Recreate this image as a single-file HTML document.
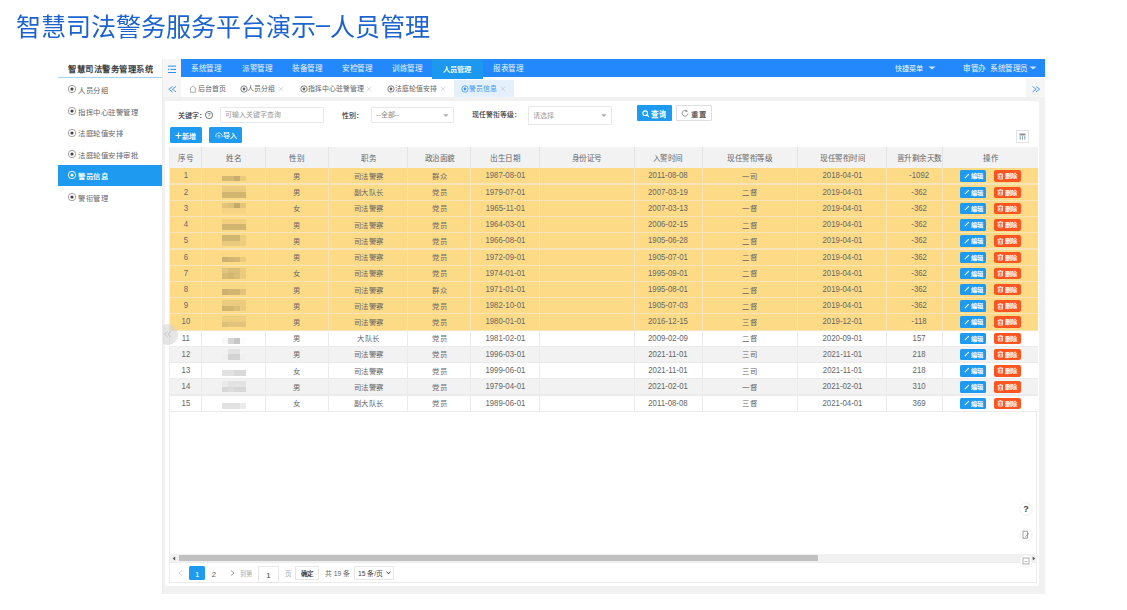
<!DOCTYPE html>
<html lang="zh-CN"><head><meta charset="utf-8"><title>人员管理</title>
<style>
html,body{margin:0;padding:0;background:#fff;}
body{width:1127px;height:610px;overflow:hidden;position:relative;font-family:'Liberation Sans', sans-serif;}
svg{overflow:visible}
</style></head><body>
<div style="position:absolute;left:15.60px;top:-13.20px;line-height:80px;font-size:100.20px;color:#1c63cf;font-weight:350;white-space:nowrap;transform:scale(0.25);transform-origin:0 50%;">智慧司法警务服务平台演示<span style='font-family:"Liberation Sans";position:relative;top:-10px;'>–</span>人员管理</div>
<div style="position:absolute;left:68.30px;top:28.70px;line-height:80px;font-size:33.60px;color:#3a3a3a;font-weight:bold;white-space:nowrap;transform:scale(0.25);transform-origin:0 50%;">智慧司法警务管理系统</div>
<div style="position:absolute;left:58.00px;top:76.70px;width:104.00px;height:1.50px;background:#a6d3f2"></div>
<div style="position:absolute;left:162.00px;top:59.00px;width:1.00px;height:535.00px;background:#ececec"></div>
<svg style="position:absolute;left:67.40px;top:84.30px" width="10" height="10" viewBox="0 0 10 10"><circle cx="5" cy="5" r="3.7" fill="none" stroke="#999" stroke-width="0.9"/><circle cx="5" cy="5" r="1.6" fill="#444"/></svg>
<div style="position:absolute;left:78.30px;top:49.80px;line-height:80px;font-size:29.60px;color:#666;font-weight:normal;white-space:nowrap;transform:scale(0.25);transform-origin:0 50%;">人员分组</div>
<svg style="position:absolute;left:67.40px;top:106.30px" width="10" height="10" viewBox="0 0 10 10"><circle cx="5" cy="5" r="3.7" fill="none" stroke="#999" stroke-width="0.9"/><circle cx="5" cy="5" r="1.6" fill="#444"/></svg>
<div style="position:absolute;left:78.30px;top:71.80px;line-height:80px;font-size:29.60px;color:#666;font-weight:normal;white-space:nowrap;transform:scale(0.25);transform-origin:0 50%;">指挥中心驻警管理</div>
<svg style="position:absolute;left:67.40px;top:127.60px" width="10" height="10" viewBox="0 0 10 10"><circle cx="5" cy="5" r="3.7" fill="none" stroke="#999" stroke-width="0.9"/><circle cx="5" cy="5" r="1.6" fill="#444"/></svg>
<div style="position:absolute;left:78.30px;top:93.10px;line-height:80px;font-size:29.60px;color:#666;font-weight:normal;white-space:nowrap;transform:scale(0.25);transform-origin:0 50%;">法庭轮值安排</div>
<svg style="position:absolute;left:67.40px;top:149.00px" width="10" height="10" viewBox="0 0 10 10"><circle cx="5" cy="5" r="3.7" fill="none" stroke="#999" stroke-width="0.9"/><circle cx="5" cy="5" r="1.6" fill="#444"/></svg>
<div style="position:absolute;left:78.30px;top:114.50px;line-height:80px;font-size:29.60px;color:#666;font-weight:normal;white-space:nowrap;transform:scale(0.25);transform-origin:0 50%;">法庭轮值安排审批</div>
<div style="position:absolute;left:58.00px;top:165.00px;width:104.00px;height:21.20px;background:#1e9bf0"></div>
<svg style="position:absolute;left:67.40px;top:170.40px" width="10" height="10" viewBox="0 0 10 10"><circle cx="5" cy="5" r="3.7" fill="none" stroke="#fff" stroke-width="0.9"/><circle cx="5" cy="5" r="1.6" fill="#fff"/></svg>
<div style="position:absolute;left:78.30px;top:135.90px;line-height:80px;font-size:29.60px;color:#fff;font-weight:bold;white-space:nowrap;transform:scale(0.25);transform-origin:0 50%;">警员信息</div>
<svg style="position:absolute;left:67.40px;top:192.00px" width="10" height="10" viewBox="0 0 10 10"><circle cx="5" cy="5" r="3.7" fill="none" stroke="#999" stroke-width="0.9"/><circle cx="5" cy="5" r="1.6" fill="#444"/></svg>
<div style="position:absolute;left:78.30px;top:157.50px;line-height:80px;font-size:29.60px;color:#666;font-weight:normal;white-space:nowrap;transform:scale(0.25);transform-origin:0 50%;">警衔管理</div>
<div style="position:absolute;left:163.00px;top:59.00px;width:18.00px;height:19.00px;background:#f6f6f6"></div>
<svg style="position:absolute;left:167.00px;top:64.00px" width="10" height="10" viewBox="0 0 10 10"><rect x="1" y="1.6" width="8" height="1" fill="#2b8ef0"/><rect x="1" y="4.9" width="1.3" height="1" fill="#2b8ef0"/><rect x="3.4" y="4.9" width="5.6" height="1" fill="#2b8ef0"/><rect x="1" y="8" width="8" height="1" fill="#2b8ef0"/></svg>
<div style="position:absolute;left:181.00px;top:59.00px;width:864.00px;height:18.30px;background:#2288fc"></div>
<div style="position:absolute;left:181.40px;top:28.40px;width:200.80px;text-align:center;line-height:80px;font-size:30.40px;color:#e8f2ff;font-weight:normal;white-space:nowrap;transform:scale(0.2500,0.25);transform-origin:0 50%;">系统管理</div>
<div style="position:absolute;left:231.60px;top:28.40px;width:200.80px;text-align:center;line-height:80px;font-size:30.40px;color:#e8f2ff;font-weight:normal;white-space:nowrap;transform:scale(0.2500,0.25);transform-origin:0 50%;">派警管理</div>
<div style="position:absolute;left:281.80px;top:28.40px;width:200.80px;text-align:center;line-height:80px;font-size:30.40px;color:#e8f2ff;font-weight:normal;white-space:nowrap;transform:scale(0.2500,0.25);transform-origin:0 50%;">装备管理</div>
<div style="position:absolute;left:332.00px;top:28.40px;width:200.80px;text-align:center;line-height:80px;font-size:30.40px;color:#e8f2ff;font-weight:normal;white-space:nowrap;transform:scale(0.2500,0.25);transform-origin:0 50%;">安检管理</div>
<div style="position:absolute;left:382.20px;top:28.40px;width:200.80px;text-align:center;line-height:80px;font-size:30.40px;color:#e8f2ff;font-weight:normal;white-space:nowrap;transform:scale(0.2500,0.25);transform-origin:0 50%;">训练管理</div>
<div style="position:absolute;left:432.40px;top:59.00px;width:50.20px;height:19.70px;background:#1c98ee"></div>
<div style="position:absolute;left:432.40px;top:28.60px;width:200.80px;text-align:center;line-height:80px;font-size:29.00px;color:#fff;font-weight:bold;white-space:nowrap;transform:scale(0.2500,0.25);transform-origin:0 50%;">人员管理</div>
<div style="position:absolute;left:482.60px;top:28.40px;width:200.80px;text-align:center;line-height:80px;font-size:30.40px;color:#e8f2ff;font-weight:normal;white-space:nowrap;transform:scale(0.2500,0.25);transform-origin:0 50%;">报表管理</div>
<div style="position:absolute;left:895.00px;top:28.40px;line-height:80px;font-size:28.40px;color:#eef5ff;font-weight:normal;white-space:nowrap;transform:scale(0.25);transform-origin:0 50%;">快捷菜单</div>
<svg style="position:absolute;left:927.50px;top:66.00px" width="8" height="4" viewBox="0 0 8 4"><path d="M0.5 0.5 L7.5 0.5 L4 3.5 Z" fill="#cfe3fb"/></svg>
<div style="position:absolute;left:963.00px;top:28.40px;line-height:80px;font-size:30.40px;color:#eef5ff;font-weight:normal;white-space:nowrap;transform:scale(0.25);transform-origin:0 50%;">审管办</div>
<div style="position:absolute;left:990.00px;top:28.40px;line-height:80px;font-size:30.40px;color:#eef5ff;font-weight:normal;white-space:nowrap;transform:scale(0.25);transform-origin:0 50%;">系统管理员</div>
<svg style="position:absolute;left:1029.00px;top:66.00px" width="8" height="4" viewBox="0 0 8 4"><path d="M0.5 0.5 L7.5 0.5 L4 3.5 Z" fill="#cfe3fb"/></svg>
<div style="position:absolute;left:163.00px;top:78.00px;width:18.00px;height:19.20px;background:#f6f6f6"></div>
<svg style="position:absolute;left:167.80px;top:85.60px" width="9" height="7" viewBox="0 0 9 7"><path d="M4.5 0.5 L0.8 3.2 L4.5 5.9 M8 0.5 L4.3 3.2 L8 5.9" fill="none" stroke="#3f95ee" stroke-width="0.9"/></svg>
<div style="position:absolute;left:1026.00px;top:78.00px;width:19.00px;height:19.20px;background:#f6f6f6"></div>
<svg style="position:absolute;left:1031.50px;top:85.60px" width="9" height="7" viewBox="0 0 9 7"><path d="M0.5 0.5 L4.2 3.2 L0.5 5.9 M4 0.5 L7.7 3.2 L4 5.9" fill="none" stroke="#3f95ee" stroke-width="0.9"/></svg>
<svg style="position:absolute;left:188.50px;top:84.50px" width="8" height="8" viewBox="0 0 8 8"><path d="M0.7 3.8 L4 0.8 L7.3 3.8 M1.6 3.2 V7.3 H6.4 V3.2" fill="none" stroke="#999" stroke-width="0.8"/></svg>
<div style="position:absolute;left:197.60px;top:49.10px;line-height:80px;font-size:28.00px;color:#666;font-weight:normal;white-space:nowrap;transform:scale(0.25);transform-origin:0 50%;">后台首页</div>
<svg style="position:absolute;left:238.50px;top:83.60px" width="10" height="10" viewBox="0 0 10 10"><circle cx="5" cy="5" r="3.2" fill="none" stroke="#666" stroke-width="0.8"/><circle cx="5" cy="5" r="1.4" fill="#666"/></svg>
<div style="position:absolute;left:247.30px;top:49.10px;line-height:80px;font-size:27.60px;color:#666;font-weight:normal;white-space:nowrap;transform:scale(0.25);transform-origin:0 50%;">人员分组</div>
<svg style="position:absolute;left:278.30px;top:86.30px" width="6" height="6" viewBox="0 0 6 6"><path d="M0.6 0.6 L5.2 5.2 M5.2 0.6 L0.6 5.2" stroke="#c8c8c8" stroke-width="0.7"/></svg>
<svg style="position:absolute;left:298.80px;top:83.60px" width="10" height="10" viewBox="0 0 10 10"><circle cx="5" cy="5" r="3.2" fill="none" stroke="#666" stroke-width="0.8"/><circle cx="5" cy="5" r="1.4" fill="#666"/></svg>
<div style="position:absolute;left:307.60px;top:49.10px;line-height:80px;font-size:27.60px;color:#666;font-weight:normal;white-space:nowrap;transform:scale(0.25);transform-origin:0 50%;">指挥中心驻警管理</div>
<svg style="position:absolute;left:365.70px;top:86.30px" width="6" height="6" viewBox="0 0 6 6"><path d="M0.6 0.6 L5.2 5.2 M5.2 0.6 L0.6 5.2" stroke="#c8c8c8" stroke-width="0.7"/></svg>
<svg style="position:absolute;left:386.00px;top:83.60px" width="10" height="10" viewBox="0 0 10 10"><circle cx="5" cy="5" r="3.2" fill="none" stroke="#666" stroke-width="0.8"/><circle cx="5" cy="5" r="1.4" fill="#666"/></svg>
<div style="position:absolute;left:394.80px;top:49.10px;line-height:80px;font-size:27.60px;color:#666;font-weight:normal;white-space:nowrap;transform:scale(0.25);transform-origin:0 50%;">法庭轮值安排</div>
<svg style="position:absolute;left:439.70px;top:86.30px" width="6" height="6" viewBox="0 0 6 6"><path d="M0.6 0.6 L5.2 5.2 M5.2 0.6 L0.6 5.2" stroke="#c8c8c8" stroke-width="0.7"/></svg>
<div style="position:absolute;left:454.30px;top:79.80px;width:60.20px;height:17.40px;background:#e4f1fc"></div>
<svg style="position:absolute;left:459.80px;top:83.60px" width="10" height="10" viewBox="0 0 10 10"><circle cx="5" cy="5" r="3.2" fill="none" stroke="#3d97ee" stroke-width="0.8"/><circle cx="5" cy="5" r="1.4" fill="#3d97ee"/></svg>
<div style="position:absolute;left:468.60px;top:49.10px;line-height:80px;font-size:27.60px;color:#3d97ee;font-weight:normal;white-space:nowrap;transform:scale(0.25);transform-origin:0 50%;">警员信息</div>
<svg style="position:absolute;left:499.80px;top:86.30px" width="6" height="6" viewBox="0 0 6 6"><path d="M0.6 0.6 L5.2 5.2 M5.2 0.6 L0.6 5.2" stroke="#c8c8c8" stroke-width="0.7"/></svg>
<div style="position:absolute;left:163.00px;top:97.20px;width:882.00px;height:496.80px;background:#f1f1f1"></div>
<div style="position:absolute;left:165.20px;top:100.60px;width:874.30px;height:485.10px;background:#fff;border-radius:2px"></div>
<div style="position:absolute;left:169.20px;top:146.80px;width:868.20px;height:436.70px;border:1px solid #ececec;box-sizing:border-box"></div>
<div style="position:absolute;left:177.50px;top:75.80px;line-height:80px;font-size:28.00px;color:#222;font-weight:normal;white-space:nowrap;transform:scale(0.25);transform-origin:0 50%;-webkit-text-stroke:0.25px #444;">关键字：</div>
<svg style="position:absolute;left:203.60px;top:110.30px" width="10" height="10" viewBox="0 0 10 10"><circle cx="5" cy="5" r="3.6" fill="none" stroke="#555" stroke-width="0.8"/><text x="5" y="7.4" font-size="6" text-anchor="middle" fill="#555" font-family="Liberation Sans">?</text></svg>
<div style="position:absolute;left:220.00px;top:106.60px;width:104.40px;height:16.60px;border:1px solid #e8e8e8;box-sizing:border-box;background:#fff;border-radius:1px"></div>
<div style="position:absolute;left:225.30px;top:75.10px;line-height:80px;font-size:27.60px;color:#999;font-weight:normal;white-space:nowrap;transform:scale(0.25);transform-origin:0 50%;">可输入关键字查询</div>
<div style="position:absolute;left:342.00px;top:75.60px;line-height:80px;font-size:28.00px;color:#222;font-weight:normal;white-space:nowrap;transform:scale(0.25);transform-origin:0 50%;-webkit-text-stroke:0.25px #444;">性别：</div>
<div style="position:absolute;left:370.60px;top:106.70px;width:83.40px;height:16.50px;border:1px solid #e8e8e8;box-sizing:border-box;background:#fff;border-radius:1px"></div>
<div style="position:absolute;left:376.40px;top:75.30px;line-height:80px;font-size:28.00px;color:#888;font-weight:normal;white-space:nowrap;transform:scale(0.25);transform-origin:0 50%;">--全部--</div>
<svg style="position:absolute;left:442.50px;top:113.50px" width="6" height="4" viewBox="0 0 6 4"><path d="M0.3 0.3 L5.5 0.3 L2.9 3 Z" fill="#aaa"/></svg>
<div style="position:absolute;left:472.00px;top:75.10px;line-height:80px;font-size:27.60px;color:#222;font-weight:normal;white-space:nowrap;transform:scale(0.25);transform-origin:0 50%;-webkit-text-stroke:0.25px #444;">现任警衔等级：</div>
<div style="position:absolute;left:527.60px;top:105.50px;width:84.90px;height:19.30px;border:1px solid #e8e8e8;box-sizing:border-box;background:#fff;border-radius:1px"></div>
<div style="position:absolute;left:533.40px;top:75.50px;line-height:80px;font-size:28.00px;color:#a0a0a0;font-weight:normal;white-space:nowrap;transform:scale(0.25);transform-origin:0 50%;">请选择</div>
<svg style="position:absolute;left:601.20px;top:113.60px" width="6" height="4" viewBox="0 0 6 4"><path d="M0.3 0.3 L5.5 0.3 L2.9 3 Z" fill="#aaa"/></svg>
<div style="position:absolute;left:636.90px;top:105.10px;width:34.70px;height:16.30px;background:#1e9bf0;border-radius:1px"></div>
<svg style="position:absolute;left:641.50px;top:109.50px" width="8" height="8" viewBox="0 0 8 8"><circle cx="3.2" cy="3.2" r="2.3" fill="none" stroke="#fff" stroke-width="1.1"/><path d="M4.9 4.9 L6.9 6.9" stroke="#fff" stroke-width="1.2"/></svg>
<div style="position:absolute;left:651.20px;top:73.90px;line-height:80px;font-size:30.40px;color:#fff;font-weight:bold;white-space:nowrap;transform:scale(0.25);transform-origin:0 50%;">查询</div>
<div style="position:absolute;left:676.30px;top:105.30px;width:35.30px;height:16.10px;border:1px solid #dedede;box-sizing:border-box;background:#fff;border-radius:1px"></div>
<svg style="position:absolute;left:681.30px;top:109.40px" width="8" height="8" viewBox="0 0 8 8"><path d="M5.9 2.0 A2.9 2.9 0 1 0 6.9 4.7" fill="none" stroke="#777" stroke-width="0.8"/><path d="M5.0 0.6 L6.3 2.3 L4.4 2.8" fill="none" stroke="#777" stroke-width="0.7"/></svg>
<div style="position:absolute;left:691.30px;top:73.90px;line-height:80px;font-size:29.60px;color:#333;font-weight:normal;white-space:nowrap;transform:scale(0.25);transform-origin:0 50%;-webkit-text-stroke:0.3px #555;">重置</div>
<div style="position:absolute;left:169.50px;top:127.20px;width:32.30px;height:16.00px;background:#1e9bf0;border-radius:1.5px"></div>
<svg style="position:absolute;left:175.30px;top:132.00px" width="7" height="7" viewBox="0 0 7 7"><path d="M3.5 0.5 V6.5 M0.5 3.5 H6.5" stroke="#fff" stroke-width="1.1"/></svg>
<div style="position:absolute;left:182.00px;top:95.70px;line-height:80px;font-size:28.40px;color:#fff;font-weight:bold;white-space:nowrap;transform:scale(0.25);transform-origin:0 50%;">新增</div>
<div style="position:absolute;left:209.00px;top:127.20px;width:32.50px;height:16.00px;background:#1e9bf0;border-radius:1.5px"></div>
<svg style="position:absolute;left:214.50px;top:131.80px" width="8" height="7" viewBox="0 0 8 7"><path d="M1.5 5.3 A2 2 0 0 1 2.2 1.8 A2.4 2.4 0 0 1 6.3 2.4 A1.6 1.6 0 0 1 6.6 5.3" fill="none" stroke="#fff" stroke-width="0.8"/><path d="M4 6.5 V3.3 M2.9 4.3 L4 3.2 L5.1 4.3" fill="none" stroke="#fff" stroke-width="0.7"/></svg>
<div style="position:absolute;left:223.20px;top:95.70px;line-height:80px;font-size:28.00px;color:#fff;font-weight:bold;white-space:nowrap;transform:scale(0.25);transform-origin:0 50%;">导入</div>
<div style="position:absolute;left:1015.60px;top:130.30px;width:13.20px;height:13.20px;border:1px solid #e2e2e2;box-sizing:border-box;background:#fff"></div>
<svg style="position:absolute;left:1018.60px;top:133.40px" width="7" height="7" viewBox="0 0 7 7"><rect x="0.5" y="0.5" width="6" height="2" fill="#8a8f99"/><rect x="0.6" y="3.2" width="1.2" height="3.4" fill="#8fa6b8"/><rect x="2.9" y="3.2" width="1.2" height="3.4" fill="#8fa6b8"/><rect x="5.2" y="3.2" width="1.2" height="3.4" fill="#8fa6b8"/></svg>
<div style="position:absolute;left:169.70px;top:147.00px;width:868.30px;height:20.80px;background:#f2f2f2"></div>
<div style="position:absolute;left:169.70px;top:117.90px;width:127.20px;text-align:center;line-height:80px;font-size:30.40px;color:#666;font-weight:normal;white-space:nowrap;transform:scale(0.2500,0.25);transform-origin:0 50%;">序号</div>
<div style="position:absolute;left:201.50px;top:117.90px;width:254.00px;text-align:center;line-height:80px;font-size:30.40px;color:#666;font-weight:normal;white-space:nowrap;transform:scale(0.2500,0.25);transform-origin:0 50%;">姓名</div>
<div style="position:absolute;left:201.00px;top:147.00px;width:1.00px;height:20.80px;background:#e4e4e4"></div>
<div style="position:absolute;left:265.00px;top:117.90px;width:254.00px;text-align:center;line-height:80px;font-size:30.40px;color:#666;font-weight:normal;white-space:nowrap;transform:scale(0.2500,0.25);transform-origin:0 50%;">性别</div>
<div style="position:absolute;left:264.50px;top:147.00px;width:1.00px;height:20.80px;background:#e4e4e4"></div>
<div style="position:absolute;left:328.50px;top:117.90px;width:316.00px;text-align:center;line-height:80px;font-size:30.40px;color:#666;font-weight:normal;white-space:nowrap;transform:scale(0.2500,0.25);transform-origin:0 50%;">职务</div>
<div style="position:absolute;left:328.00px;top:147.00px;width:1.00px;height:20.80px;background:#e4e4e4"></div>
<div style="position:absolute;left:407.50px;top:117.90px;width:252.00px;text-align:center;line-height:80px;font-size:30.40px;color:#666;font-weight:normal;white-space:nowrap;transform:scale(0.2500,0.25);transform-origin:0 50%;">政治面貌</div>
<div style="position:absolute;left:407.00px;top:147.00px;width:1.00px;height:20.80px;background:#e4e4e4"></div>
<div style="position:absolute;left:470.50px;top:117.90px;width:274.80px;text-align:center;line-height:80px;font-size:30.40px;color:#666;font-weight:normal;white-space:nowrap;transform:scale(0.2500,0.25);transform-origin:0 50%;">出生日期</div>
<div style="position:absolute;left:470.00px;top:147.00px;width:1.00px;height:20.80px;background:#e4e4e4"></div>
<div style="position:absolute;left:539.20px;top:117.90px;width:380.80px;text-align:center;line-height:80px;font-size:30.40px;color:#666;font-weight:normal;white-space:nowrap;transform:scale(0.2500,0.25);transform-origin:0 50%;">身份证号</div>
<div style="position:absolute;left:538.70px;top:147.00px;width:1.00px;height:20.80px;background:#e4e4e4"></div>
<div style="position:absolute;left:634.40px;top:117.90px;width:271.60px;text-align:center;line-height:80px;font-size:30.40px;color:#666;font-weight:normal;white-space:nowrap;transform:scale(0.2500,0.25);transform-origin:0 50%;">入警时间</div>
<div style="position:absolute;left:633.90px;top:147.00px;width:1.00px;height:20.80px;background:#e4e4e4"></div>
<div style="position:absolute;left:702.30px;top:117.90px;width:380.80px;text-align:center;line-height:80px;font-size:30.40px;color:#666;font-weight:normal;white-space:nowrap;transform:scale(0.2500,0.25);transform-origin:0 50%;">现任警衔等级</div>
<div style="position:absolute;left:701.80px;top:147.00px;width:1.00px;height:20.80px;background:#e4e4e4"></div>
<div style="position:absolute;left:797.50px;top:117.90px;width:356.00px;text-align:center;line-height:80px;font-size:30.40px;color:#666;font-weight:normal;white-space:nowrap;transform:scale(0.2500,0.25);transform-origin:0 50%;">现任警衔时间</div>
<div style="position:absolute;left:797.00px;top:147.00px;width:1.00px;height:20.80px;background:#e4e4e4"></div>
<div style="position:absolute;left:886.50px;top:117.90px;width:256.80px;text-align:center;line-height:80px;font-size:30.40px;color:#666;font-weight:normal;white-space:nowrap;transform:scale(0.2500,0.25);transform-origin:0 50%;">晋升剩余天数</div>
<div style="position:absolute;left:886.00px;top:147.00px;width:1.00px;height:20.80px;background:#e4e4e4"></div>
<div style="position:absolute;left:942.60px;top:117.90px;width:381.60px;text-align:center;line-height:80px;font-size:30.40px;color:#666;font-weight:normal;white-space:nowrap;transform:scale(0.2500,0.25);transform-origin:0 50%;">操作</div>
<div style="position:absolute;left:942.10px;top:147.00px;width:1.00px;height:20.80px;background:#e4e4e4"></div>
<div style="position:absolute;left:169.70px;top:167.80px;width:868.30px;height:16.23px;background:#fddb86"></div>
<div style="position:absolute;left:169.70px;top:184.03px;width:868.30px;height:16.23px;background:#fddb86"></div>
<div style="position:absolute;left:169.70px;top:200.26px;width:868.30px;height:16.23px;background:#fddb86"></div>
<div style="position:absolute;left:169.70px;top:216.49px;width:868.30px;height:16.23px;background:#fddb86"></div>
<div style="position:absolute;left:169.70px;top:232.72px;width:868.30px;height:16.23px;background:#fddb86"></div>
<div style="position:absolute;left:169.70px;top:248.95px;width:868.30px;height:16.23px;background:#fddb86"></div>
<div style="position:absolute;left:169.70px;top:265.18px;width:868.30px;height:16.23px;background:#fddb86"></div>
<div style="position:absolute;left:169.70px;top:281.41px;width:868.30px;height:16.23px;background:#fddb86"></div>
<div style="position:absolute;left:169.70px;top:297.64px;width:868.30px;height:16.23px;background:#fddb86"></div>
<div style="position:absolute;left:169.70px;top:313.87px;width:868.30px;height:16.23px;background:#fddb86"></div>
<div style="position:absolute;left:169.70px;top:330.10px;width:868.30px;height:16.23px;background:#fff"></div>
<div style="position:absolute;left:169.70px;top:346.33px;width:868.30px;height:16.23px;background:#f2f2f2"></div>
<div style="position:absolute;left:169.70px;top:362.56px;width:868.30px;height:16.23px;background:#fff"></div>
<div style="position:absolute;left:169.70px;top:378.79px;width:868.30px;height:16.23px;background:#f2f2f2"></div>
<div style="position:absolute;left:169.70px;top:395.02px;width:868.30px;height:16.23px;background:#fff"></div>
<div style="position:absolute;left:169.70px;top:183.43px;width:868.30px;height:1.20px;background:#f6e5ba"></div>
<div style="position:absolute;left:201.00px;top:167.80px;width:1.00px;height:16.23px;background:#f6e5ba"></div>
<div style="position:absolute;left:264.50px;top:167.80px;width:1.00px;height:16.23px;background:#f6e5ba"></div>
<div style="position:absolute;left:328.00px;top:167.80px;width:1.00px;height:16.23px;background:#f6e5ba"></div>
<div style="position:absolute;left:407.00px;top:167.80px;width:1.00px;height:16.23px;background:#f6e5ba"></div>
<div style="position:absolute;left:470.00px;top:167.80px;width:1.00px;height:16.23px;background:#f6e5ba"></div>
<div style="position:absolute;left:538.70px;top:167.80px;width:1.00px;height:16.23px;background:#f6e5ba"></div>
<div style="position:absolute;left:633.90px;top:167.80px;width:1.00px;height:16.23px;background:#f6e5ba"></div>
<div style="position:absolute;left:701.80px;top:167.80px;width:1.00px;height:16.23px;background:#f6e5ba"></div>
<div style="position:absolute;left:797.00px;top:167.80px;width:1.00px;height:16.23px;background:#f6e5ba"></div>
<div style="position:absolute;left:886.00px;top:167.80px;width:1.00px;height:16.23px;background:#f6e5ba"></div>
<div style="position:absolute;left:942.10px;top:167.80px;width:1.00px;height:16.23px;background:#f6e5ba"></div>
<div style="position:absolute;left:169.70px;top:199.66px;width:868.30px;height:1.20px;background:#f6e5ba"></div>
<div style="position:absolute;left:201.00px;top:184.03px;width:1.00px;height:16.23px;background:#f6e5ba"></div>
<div style="position:absolute;left:264.50px;top:184.03px;width:1.00px;height:16.23px;background:#f6e5ba"></div>
<div style="position:absolute;left:328.00px;top:184.03px;width:1.00px;height:16.23px;background:#f6e5ba"></div>
<div style="position:absolute;left:407.00px;top:184.03px;width:1.00px;height:16.23px;background:#f6e5ba"></div>
<div style="position:absolute;left:470.00px;top:184.03px;width:1.00px;height:16.23px;background:#f6e5ba"></div>
<div style="position:absolute;left:538.70px;top:184.03px;width:1.00px;height:16.23px;background:#f6e5ba"></div>
<div style="position:absolute;left:633.90px;top:184.03px;width:1.00px;height:16.23px;background:#f6e5ba"></div>
<div style="position:absolute;left:701.80px;top:184.03px;width:1.00px;height:16.23px;background:#f6e5ba"></div>
<div style="position:absolute;left:797.00px;top:184.03px;width:1.00px;height:16.23px;background:#f6e5ba"></div>
<div style="position:absolute;left:886.00px;top:184.03px;width:1.00px;height:16.23px;background:#f6e5ba"></div>
<div style="position:absolute;left:942.10px;top:184.03px;width:1.00px;height:16.23px;background:#f6e5ba"></div>
<div style="position:absolute;left:169.70px;top:215.89px;width:868.30px;height:1.20px;background:#f6e5ba"></div>
<div style="position:absolute;left:201.00px;top:200.26px;width:1.00px;height:16.23px;background:#f6e5ba"></div>
<div style="position:absolute;left:264.50px;top:200.26px;width:1.00px;height:16.23px;background:#f6e5ba"></div>
<div style="position:absolute;left:328.00px;top:200.26px;width:1.00px;height:16.23px;background:#f6e5ba"></div>
<div style="position:absolute;left:407.00px;top:200.26px;width:1.00px;height:16.23px;background:#f6e5ba"></div>
<div style="position:absolute;left:470.00px;top:200.26px;width:1.00px;height:16.23px;background:#f6e5ba"></div>
<div style="position:absolute;left:538.70px;top:200.26px;width:1.00px;height:16.23px;background:#f6e5ba"></div>
<div style="position:absolute;left:633.90px;top:200.26px;width:1.00px;height:16.23px;background:#f6e5ba"></div>
<div style="position:absolute;left:701.80px;top:200.26px;width:1.00px;height:16.23px;background:#f6e5ba"></div>
<div style="position:absolute;left:797.00px;top:200.26px;width:1.00px;height:16.23px;background:#f6e5ba"></div>
<div style="position:absolute;left:886.00px;top:200.26px;width:1.00px;height:16.23px;background:#f6e5ba"></div>
<div style="position:absolute;left:942.10px;top:200.26px;width:1.00px;height:16.23px;background:#f6e5ba"></div>
<div style="position:absolute;left:169.70px;top:232.12px;width:868.30px;height:1.20px;background:#f6e5ba"></div>
<div style="position:absolute;left:201.00px;top:216.49px;width:1.00px;height:16.23px;background:#f6e5ba"></div>
<div style="position:absolute;left:264.50px;top:216.49px;width:1.00px;height:16.23px;background:#f6e5ba"></div>
<div style="position:absolute;left:328.00px;top:216.49px;width:1.00px;height:16.23px;background:#f6e5ba"></div>
<div style="position:absolute;left:407.00px;top:216.49px;width:1.00px;height:16.23px;background:#f6e5ba"></div>
<div style="position:absolute;left:470.00px;top:216.49px;width:1.00px;height:16.23px;background:#f6e5ba"></div>
<div style="position:absolute;left:538.70px;top:216.49px;width:1.00px;height:16.23px;background:#f6e5ba"></div>
<div style="position:absolute;left:633.90px;top:216.49px;width:1.00px;height:16.23px;background:#f6e5ba"></div>
<div style="position:absolute;left:701.80px;top:216.49px;width:1.00px;height:16.23px;background:#f6e5ba"></div>
<div style="position:absolute;left:797.00px;top:216.49px;width:1.00px;height:16.23px;background:#f6e5ba"></div>
<div style="position:absolute;left:886.00px;top:216.49px;width:1.00px;height:16.23px;background:#f6e5ba"></div>
<div style="position:absolute;left:942.10px;top:216.49px;width:1.00px;height:16.23px;background:#f6e5ba"></div>
<div style="position:absolute;left:169.70px;top:248.35px;width:868.30px;height:1.20px;background:#f6e5ba"></div>
<div style="position:absolute;left:201.00px;top:232.72px;width:1.00px;height:16.23px;background:#f6e5ba"></div>
<div style="position:absolute;left:264.50px;top:232.72px;width:1.00px;height:16.23px;background:#f6e5ba"></div>
<div style="position:absolute;left:328.00px;top:232.72px;width:1.00px;height:16.23px;background:#f6e5ba"></div>
<div style="position:absolute;left:407.00px;top:232.72px;width:1.00px;height:16.23px;background:#f6e5ba"></div>
<div style="position:absolute;left:470.00px;top:232.72px;width:1.00px;height:16.23px;background:#f6e5ba"></div>
<div style="position:absolute;left:538.70px;top:232.72px;width:1.00px;height:16.23px;background:#f6e5ba"></div>
<div style="position:absolute;left:633.90px;top:232.72px;width:1.00px;height:16.23px;background:#f6e5ba"></div>
<div style="position:absolute;left:701.80px;top:232.72px;width:1.00px;height:16.23px;background:#f6e5ba"></div>
<div style="position:absolute;left:797.00px;top:232.72px;width:1.00px;height:16.23px;background:#f6e5ba"></div>
<div style="position:absolute;left:886.00px;top:232.72px;width:1.00px;height:16.23px;background:#f6e5ba"></div>
<div style="position:absolute;left:942.10px;top:232.72px;width:1.00px;height:16.23px;background:#f6e5ba"></div>
<div style="position:absolute;left:169.70px;top:264.58px;width:868.30px;height:1.20px;background:#f6e5ba"></div>
<div style="position:absolute;left:201.00px;top:248.95px;width:1.00px;height:16.23px;background:#f6e5ba"></div>
<div style="position:absolute;left:264.50px;top:248.95px;width:1.00px;height:16.23px;background:#f6e5ba"></div>
<div style="position:absolute;left:328.00px;top:248.95px;width:1.00px;height:16.23px;background:#f6e5ba"></div>
<div style="position:absolute;left:407.00px;top:248.95px;width:1.00px;height:16.23px;background:#f6e5ba"></div>
<div style="position:absolute;left:470.00px;top:248.95px;width:1.00px;height:16.23px;background:#f6e5ba"></div>
<div style="position:absolute;left:538.70px;top:248.95px;width:1.00px;height:16.23px;background:#f6e5ba"></div>
<div style="position:absolute;left:633.90px;top:248.95px;width:1.00px;height:16.23px;background:#f6e5ba"></div>
<div style="position:absolute;left:701.80px;top:248.95px;width:1.00px;height:16.23px;background:#f6e5ba"></div>
<div style="position:absolute;left:797.00px;top:248.95px;width:1.00px;height:16.23px;background:#f6e5ba"></div>
<div style="position:absolute;left:886.00px;top:248.95px;width:1.00px;height:16.23px;background:#f6e5ba"></div>
<div style="position:absolute;left:942.10px;top:248.95px;width:1.00px;height:16.23px;background:#f6e5ba"></div>
<div style="position:absolute;left:169.70px;top:280.81px;width:868.30px;height:1.20px;background:#f6e5ba"></div>
<div style="position:absolute;left:201.00px;top:265.18px;width:1.00px;height:16.23px;background:#f6e5ba"></div>
<div style="position:absolute;left:264.50px;top:265.18px;width:1.00px;height:16.23px;background:#f6e5ba"></div>
<div style="position:absolute;left:328.00px;top:265.18px;width:1.00px;height:16.23px;background:#f6e5ba"></div>
<div style="position:absolute;left:407.00px;top:265.18px;width:1.00px;height:16.23px;background:#f6e5ba"></div>
<div style="position:absolute;left:470.00px;top:265.18px;width:1.00px;height:16.23px;background:#f6e5ba"></div>
<div style="position:absolute;left:538.70px;top:265.18px;width:1.00px;height:16.23px;background:#f6e5ba"></div>
<div style="position:absolute;left:633.90px;top:265.18px;width:1.00px;height:16.23px;background:#f6e5ba"></div>
<div style="position:absolute;left:701.80px;top:265.18px;width:1.00px;height:16.23px;background:#f6e5ba"></div>
<div style="position:absolute;left:797.00px;top:265.18px;width:1.00px;height:16.23px;background:#f6e5ba"></div>
<div style="position:absolute;left:886.00px;top:265.18px;width:1.00px;height:16.23px;background:#f6e5ba"></div>
<div style="position:absolute;left:942.10px;top:265.18px;width:1.00px;height:16.23px;background:#f6e5ba"></div>
<div style="position:absolute;left:169.70px;top:297.04px;width:868.30px;height:1.20px;background:#f6e5ba"></div>
<div style="position:absolute;left:201.00px;top:281.41px;width:1.00px;height:16.23px;background:#f6e5ba"></div>
<div style="position:absolute;left:264.50px;top:281.41px;width:1.00px;height:16.23px;background:#f6e5ba"></div>
<div style="position:absolute;left:328.00px;top:281.41px;width:1.00px;height:16.23px;background:#f6e5ba"></div>
<div style="position:absolute;left:407.00px;top:281.41px;width:1.00px;height:16.23px;background:#f6e5ba"></div>
<div style="position:absolute;left:470.00px;top:281.41px;width:1.00px;height:16.23px;background:#f6e5ba"></div>
<div style="position:absolute;left:538.70px;top:281.41px;width:1.00px;height:16.23px;background:#f6e5ba"></div>
<div style="position:absolute;left:633.90px;top:281.41px;width:1.00px;height:16.23px;background:#f6e5ba"></div>
<div style="position:absolute;left:701.80px;top:281.41px;width:1.00px;height:16.23px;background:#f6e5ba"></div>
<div style="position:absolute;left:797.00px;top:281.41px;width:1.00px;height:16.23px;background:#f6e5ba"></div>
<div style="position:absolute;left:886.00px;top:281.41px;width:1.00px;height:16.23px;background:#f6e5ba"></div>
<div style="position:absolute;left:942.10px;top:281.41px;width:1.00px;height:16.23px;background:#f6e5ba"></div>
<div style="position:absolute;left:169.70px;top:313.27px;width:868.30px;height:1.20px;background:#f6e5ba"></div>
<div style="position:absolute;left:201.00px;top:297.64px;width:1.00px;height:16.23px;background:#f6e5ba"></div>
<div style="position:absolute;left:264.50px;top:297.64px;width:1.00px;height:16.23px;background:#f6e5ba"></div>
<div style="position:absolute;left:328.00px;top:297.64px;width:1.00px;height:16.23px;background:#f6e5ba"></div>
<div style="position:absolute;left:407.00px;top:297.64px;width:1.00px;height:16.23px;background:#f6e5ba"></div>
<div style="position:absolute;left:470.00px;top:297.64px;width:1.00px;height:16.23px;background:#f6e5ba"></div>
<div style="position:absolute;left:538.70px;top:297.64px;width:1.00px;height:16.23px;background:#f6e5ba"></div>
<div style="position:absolute;left:633.90px;top:297.64px;width:1.00px;height:16.23px;background:#f6e5ba"></div>
<div style="position:absolute;left:701.80px;top:297.64px;width:1.00px;height:16.23px;background:#f6e5ba"></div>
<div style="position:absolute;left:797.00px;top:297.64px;width:1.00px;height:16.23px;background:#f6e5ba"></div>
<div style="position:absolute;left:886.00px;top:297.64px;width:1.00px;height:16.23px;background:#f6e5ba"></div>
<div style="position:absolute;left:942.10px;top:297.64px;width:1.00px;height:16.23px;background:#f6e5ba"></div>
<div style="position:absolute;left:169.70px;top:329.50px;width:868.30px;height:1.20px;background:#f6e5ba"></div>
<div style="position:absolute;left:201.00px;top:313.87px;width:1.00px;height:16.23px;background:#f6e5ba"></div>
<div style="position:absolute;left:264.50px;top:313.87px;width:1.00px;height:16.23px;background:#f6e5ba"></div>
<div style="position:absolute;left:328.00px;top:313.87px;width:1.00px;height:16.23px;background:#f6e5ba"></div>
<div style="position:absolute;left:407.00px;top:313.87px;width:1.00px;height:16.23px;background:#f6e5ba"></div>
<div style="position:absolute;left:470.00px;top:313.87px;width:1.00px;height:16.23px;background:#f6e5ba"></div>
<div style="position:absolute;left:538.70px;top:313.87px;width:1.00px;height:16.23px;background:#f6e5ba"></div>
<div style="position:absolute;left:633.90px;top:313.87px;width:1.00px;height:16.23px;background:#f6e5ba"></div>
<div style="position:absolute;left:701.80px;top:313.87px;width:1.00px;height:16.23px;background:#f6e5ba"></div>
<div style="position:absolute;left:797.00px;top:313.87px;width:1.00px;height:16.23px;background:#f6e5ba"></div>
<div style="position:absolute;left:886.00px;top:313.87px;width:1.00px;height:16.23px;background:#f6e5ba"></div>
<div style="position:absolute;left:942.10px;top:313.87px;width:1.00px;height:16.23px;background:#f6e5ba"></div>
<div style="position:absolute;left:169.70px;top:345.73px;width:868.30px;height:1.20px;background:#ebebeb"></div>
<div style="position:absolute;left:201.00px;top:330.10px;width:1.00px;height:16.23px;background:#ebebeb"></div>
<div style="position:absolute;left:264.50px;top:330.10px;width:1.00px;height:16.23px;background:#ebebeb"></div>
<div style="position:absolute;left:328.00px;top:330.10px;width:1.00px;height:16.23px;background:#ebebeb"></div>
<div style="position:absolute;left:407.00px;top:330.10px;width:1.00px;height:16.23px;background:#ebebeb"></div>
<div style="position:absolute;left:470.00px;top:330.10px;width:1.00px;height:16.23px;background:#ebebeb"></div>
<div style="position:absolute;left:538.70px;top:330.10px;width:1.00px;height:16.23px;background:#ebebeb"></div>
<div style="position:absolute;left:633.90px;top:330.10px;width:1.00px;height:16.23px;background:#ebebeb"></div>
<div style="position:absolute;left:701.80px;top:330.10px;width:1.00px;height:16.23px;background:#ebebeb"></div>
<div style="position:absolute;left:797.00px;top:330.10px;width:1.00px;height:16.23px;background:#ebebeb"></div>
<div style="position:absolute;left:886.00px;top:330.10px;width:1.00px;height:16.23px;background:#ebebeb"></div>
<div style="position:absolute;left:942.10px;top:330.10px;width:1.00px;height:16.23px;background:#ebebeb"></div>
<div style="position:absolute;left:169.70px;top:361.96px;width:868.30px;height:1.20px;background:#ebebeb"></div>
<div style="position:absolute;left:201.00px;top:346.33px;width:1.00px;height:16.23px;background:#ebebeb"></div>
<div style="position:absolute;left:264.50px;top:346.33px;width:1.00px;height:16.23px;background:#ebebeb"></div>
<div style="position:absolute;left:328.00px;top:346.33px;width:1.00px;height:16.23px;background:#ebebeb"></div>
<div style="position:absolute;left:407.00px;top:346.33px;width:1.00px;height:16.23px;background:#ebebeb"></div>
<div style="position:absolute;left:470.00px;top:346.33px;width:1.00px;height:16.23px;background:#ebebeb"></div>
<div style="position:absolute;left:538.70px;top:346.33px;width:1.00px;height:16.23px;background:#ebebeb"></div>
<div style="position:absolute;left:633.90px;top:346.33px;width:1.00px;height:16.23px;background:#ebebeb"></div>
<div style="position:absolute;left:701.80px;top:346.33px;width:1.00px;height:16.23px;background:#ebebeb"></div>
<div style="position:absolute;left:797.00px;top:346.33px;width:1.00px;height:16.23px;background:#ebebeb"></div>
<div style="position:absolute;left:886.00px;top:346.33px;width:1.00px;height:16.23px;background:#ebebeb"></div>
<div style="position:absolute;left:942.10px;top:346.33px;width:1.00px;height:16.23px;background:#ebebeb"></div>
<div style="position:absolute;left:169.70px;top:378.19px;width:868.30px;height:1.20px;background:#ebebeb"></div>
<div style="position:absolute;left:201.00px;top:362.56px;width:1.00px;height:16.23px;background:#ebebeb"></div>
<div style="position:absolute;left:264.50px;top:362.56px;width:1.00px;height:16.23px;background:#ebebeb"></div>
<div style="position:absolute;left:328.00px;top:362.56px;width:1.00px;height:16.23px;background:#ebebeb"></div>
<div style="position:absolute;left:407.00px;top:362.56px;width:1.00px;height:16.23px;background:#ebebeb"></div>
<div style="position:absolute;left:470.00px;top:362.56px;width:1.00px;height:16.23px;background:#ebebeb"></div>
<div style="position:absolute;left:538.70px;top:362.56px;width:1.00px;height:16.23px;background:#ebebeb"></div>
<div style="position:absolute;left:633.90px;top:362.56px;width:1.00px;height:16.23px;background:#ebebeb"></div>
<div style="position:absolute;left:701.80px;top:362.56px;width:1.00px;height:16.23px;background:#ebebeb"></div>
<div style="position:absolute;left:797.00px;top:362.56px;width:1.00px;height:16.23px;background:#ebebeb"></div>
<div style="position:absolute;left:886.00px;top:362.56px;width:1.00px;height:16.23px;background:#ebebeb"></div>
<div style="position:absolute;left:942.10px;top:362.56px;width:1.00px;height:16.23px;background:#ebebeb"></div>
<div style="position:absolute;left:169.70px;top:394.42px;width:868.30px;height:1.20px;background:#ebebeb"></div>
<div style="position:absolute;left:201.00px;top:378.79px;width:1.00px;height:16.23px;background:#ebebeb"></div>
<div style="position:absolute;left:264.50px;top:378.79px;width:1.00px;height:16.23px;background:#ebebeb"></div>
<div style="position:absolute;left:328.00px;top:378.79px;width:1.00px;height:16.23px;background:#ebebeb"></div>
<div style="position:absolute;left:407.00px;top:378.79px;width:1.00px;height:16.23px;background:#ebebeb"></div>
<div style="position:absolute;left:470.00px;top:378.79px;width:1.00px;height:16.23px;background:#ebebeb"></div>
<div style="position:absolute;left:538.70px;top:378.79px;width:1.00px;height:16.23px;background:#ebebeb"></div>
<div style="position:absolute;left:633.90px;top:378.79px;width:1.00px;height:16.23px;background:#ebebeb"></div>
<div style="position:absolute;left:701.80px;top:378.79px;width:1.00px;height:16.23px;background:#ebebeb"></div>
<div style="position:absolute;left:797.00px;top:378.79px;width:1.00px;height:16.23px;background:#ebebeb"></div>
<div style="position:absolute;left:886.00px;top:378.79px;width:1.00px;height:16.23px;background:#ebebeb"></div>
<div style="position:absolute;left:942.10px;top:378.79px;width:1.00px;height:16.23px;background:#ebebeb"></div>
<div style="position:absolute;left:169.70px;top:410.65px;width:868.30px;height:1.20px;background:#ebebeb"></div>
<div style="position:absolute;left:201.00px;top:395.02px;width:1.00px;height:16.23px;background:#ebebeb"></div>
<div style="position:absolute;left:264.50px;top:395.02px;width:1.00px;height:16.23px;background:#ebebeb"></div>
<div style="position:absolute;left:328.00px;top:395.02px;width:1.00px;height:16.23px;background:#ebebeb"></div>
<div style="position:absolute;left:407.00px;top:395.02px;width:1.00px;height:16.23px;background:#ebebeb"></div>
<div style="position:absolute;left:470.00px;top:395.02px;width:1.00px;height:16.23px;background:#ebebeb"></div>
<div style="position:absolute;left:538.70px;top:395.02px;width:1.00px;height:16.23px;background:#ebebeb"></div>
<div style="position:absolute;left:633.90px;top:395.02px;width:1.00px;height:16.23px;background:#ebebeb"></div>
<div style="position:absolute;left:701.80px;top:395.02px;width:1.00px;height:16.23px;background:#ebebeb"></div>
<div style="position:absolute;left:797.00px;top:395.02px;width:1.00px;height:16.23px;background:#ebebeb"></div>
<div style="position:absolute;left:886.00px;top:395.02px;width:1.00px;height:16.23px;background:#ebebeb"></div>
<div style="position:absolute;left:942.10px;top:395.02px;width:1.00px;height:16.23px;background:#ebebeb"></div>
<div style="position:absolute;left:169.70px;top:135.42px;width:136.77px;text-align:center;line-height:80px;font-size:33.60px;color:#666;font-weight:normal;white-space:nowrap;transform:scale(0.2325,0.25);transform-origin:0 50%;">1</div>
<div style="position:absolute;left:265.00px;top:135.92px;width:254.00px;text-align:center;line-height:80px;font-size:29.60px;color:#666;font-weight:normal;white-space:nowrap;transform:scale(0.2500,0.25);transform-origin:0 50%;">男</div>
<div style="position:absolute;left:328.50px;top:135.92px;width:316.00px;text-align:center;line-height:80px;font-size:29.60px;color:#666;font-weight:normal;white-space:nowrap;transform:scale(0.2500,0.25);transform-origin:0 50%;">司法警察</div>
<div style="position:absolute;left:407.50px;top:135.92px;width:252.00px;text-align:center;line-height:80px;font-size:29.60px;color:#666;font-weight:normal;white-space:nowrap;transform:scale(0.2500,0.25);transform-origin:0 50%;">群众</div>
<div style="position:absolute;left:470.50px;top:135.42px;width:295.48px;text-align:center;line-height:80px;font-size:33.60px;color:#666;font-weight:normal;white-space:nowrap;transform:scale(0.2325,0.25);transform-origin:0 50%;">1987-08-01</div>
<div style="position:absolute;left:634.40px;top:135.42px;width:292.04px;text-align:center;line-height:80px;font-size:33.60px;color:#666;font-weight:normal;white-space:nowrap;transform:scale(0.2325,0.25);transform-origin:0 50%;">2011-08-08</div>
<div style="position:absolute;left:702.30px;top:135.92px;width:380.80px;text-align:center;line-height:80px;font-size:29.60px;color:#666;font-weight:normal;white-space:nowrap;transform:scale(0.2500,0.25);transform-origin:0 50%;">一司</div>
<div style="position:absolute;left:797.50px;top:135.42px;width:382.80px;text-align:center;line-height:80px;font-size:33.60px;color:#666;font-weight:normal;white-space:nowrap;transform:scale(0.2325,0.25);transform-origin:0 50%;">2018-04-01</div>
<div style="position:absolute;left:886.50px;top:135.42px;width:276.13px;text-align:center;line-height:80px;font-size:33.60px;color:#666;font-weight:normal;white-space:nowrap;transform:scale(0.2325,0.25);transform-origin:0 50%;">-1092</div>
<div style="position:absolute;left:221.50px;top:175.72px;width:6.15px;height:5.60px;background:rgba(110,95,70,0.28)"></div>
<div style="position:absolute;left:227.65px;top:175.72px;width:6.15px;height:5.60px;background:rgba(110,95,70,0.28)"></div>
<div style="position:absolute;left:233.80px;top:175.72px;width:6.15px;height:5.60px;background:rgba(110,95,70,0.38)"></div>
<div style="position:absolute;left:239.95px;top:175.72px;width:6.15px;height:5.60px;background:rgba(110,95,70,0.12)"></div>
<div style="position:absolute;left:959.60px;top:170.42px;width:26.40px;height:11.40px;background:#1e9bf0;border-radius:1.5px"></div>
<svg style="position:absolute;left:963.50px;top:172.72px" width="6" height="6" viewBox="0 0 6 6"><path d="M0.8 5.2 L4.8 1.2" stroke="#fff" stroke-width="1.1"/></svg>
<div style="position:absolute;left:970.50px;top:136.42px;line-height:80px;font-size:24.80px;color:#fff;font-weight:bold;white-space:nowrap;transform:scale(0.25);transform-origin:0 50%;">编辑</div>
<div style="position:absolute;left:993.70px;top:170.42px;width:27.20px;height:11.40px;background:#fb5521;border-radius:2px"></div>
<svg style="position:absolute;left:997.30px;top:172.72px" width="7" height="7" viewBox="0 0 7 7"><path d="M0.6 1.3 H6.2 M1.3 1.3 V6 H5.5 V1.3 M2.6 2.5 V5 M4.2 2.5 V5 M2.5 0.6 H4.3" fill="none" stroke="#fff" stroke-width="0.8"/></svg>
<div style="position:absolute;left:1004.80px;top:136.42px;line-height:80px;font-size:24.80px;color:#fff;font-weight:bold;white-space:nowrap;transform:scale(0.25);transform-origin:0 50%;">删除</div>
<div style="position:absolute;left:169.70px;top:151.64px;width:136.77px;text-align:center;line-height:80px;font-size:33.60px;color:#666;font-weight:normal;white-space:nowrap;transform:scale(0.2325,0.25);transform-origin:0 50%;">2</div>
<div style="position:absolute;left:265.00px;top:152.14px;width:254.00px;text-align:center;line-height:80px;font-size:29.60px;color:#666;font-weight:normal;white-space:nowrap;transform:scale(0.2500,0.25);transform-origin:0 50%;">男</div>
<div style="position:absolute;left:328.50px;top:152.14px;width:316.00px;text-align:center;line-height:80px;font-size:29.60px;color:#666;font-weight:normal;white-space:nowrap;transform:scale(0.2500,0.25);transform-origin:0 50%;">副大队长</div>
<div style="position:absolute;left:407.50px;top:152.14px;width:252.00px;text-align:center;line-height:80px;font-size:29.60px;color:#666;font-weight:normal;white-space:nowrap;transform:scale(0.2500,0.25);transform-origin:0 50%;">党员</div>
<div style="position:absolute;left:470.50px;top:151.64px;width:295.48px;text-align:center;line-height:80px;font-size:33.60px;color:#666;font-weight:normal;white-space:nowrap;transform:scale(0.2325,0.25);transform-origin:0 50%;">1979-07-01</div>
<div style="position:absolute;left:634.40px;top:151.64px;width:292.04px;text-align:center;line-height:80px;font-size:33.60px;color:#666;font-weight:normal;white-space:nowrap;transform:scale(0.2325,0.25);transform-origin:0 50%;">2007-03-19</div>
<div style="position:absolute;left:702.30px;top:152.14px;width:380.80px;text-align:center;line-height:80px;font-size:29.60px;color:#666;font-weight:normal;white-space:nowrap;transform:scale(0.2500,0.25);transform-origin:0 50%;">二督</div>
<div style="position:absolute;left:797.50px;top:151.64px;width:382.80px;text-align:center;line-height:80px;font-size:33.60px;color:#666;font-weight:normal;white-space:nowrap;transform:scale(0.2325,0.25);transform-origin:0 50%;">2019-04-01</div>
<div style="position:absolute;left:886.50px;top:151.64px;width:276.13px;text-align:center;line-height:80px;font-size:33.60px;color:#666;font-weight:normal;white-space:nowrap;transform:scale(0.2325,0.25);transform-origin:0 50%;">-362</div>
<div style="position:absolute;left:221.50px;top:186.34px;width:6.15px;height:5.60px;background:rgba(110,95,70,0.12)"></div>
<div style="position:absolute;left:227.65px;top:186.34px;width:6.15px;height:5.60px;background:rgba(110,95,70,0.12)"></div>
<div style="position:absolute;left:233.80px;top:186.34px;width:6.15px;height:5.60px;background:rgba(110,95,70,0.12)"></div>
<div style="position:absolute;left:239.95px;top:186.34px;width:6.15px;height:5.60px;background:rgba(110,95,70,0.12)"></div>
<div style="position:absolute;left:221.50px;top:191.94px;width:6.15px;height:5.60px;background:rgba(110,95,70,0.3)"></div>
<div style="position:absolute;left:227.65px;top:191.94px;width:6.15px;height:5.60px;background:rgba(110,95,70,0.3)"></div>
<div style="position:absolute;left:233.80px;top:191.94px;width:6.15px;height:5.60px;background:rgba(110,95,70,0.3)"></div>
<div style="position:absolute;left:239.95px;top:191.94px;width:6.15px;height:5.60px;background:rgba(110,95,70,0.3)"></div>
<div style="position:absolute;left:959.60px;top:186.64px;width:26.40px;height:11.40px;background:#1e9bf0;border-radius:1.5px"></div>
<svg style="position:absolute;left:963.50px;top:188.94px" width="6" height="6" viewBox="0 0 6 6"><path d="M0.8 5.2 L4.8 1.2" stroke="#fff" stroke-width="1.1"/></svg>
<div style="position:absolute;left:970.50px;top:152.64px;line-height:80px;font-size:24.80px;color:#fff;font-weight:bold;white-space:nowrap;transform:scale(0.25);transform-origin:0 50%;">编辑</div>
<div style="position:absolute;left:993.70px;top:186.64px;width:27.20px;height:11.40px;background:#fb5521;border-radius:2px"></div>
<svg style="position:absolute;left:997.30px;top:188.94px" width="7" height="7" viewBox="0 0 7 7"><path d="M0.6 1.3 H6.2 M1.3 1.3 V6 H5.5 V1.3 M2.6 2.5 V5 M4.2 2.5 V5 M2.5 0.6 H4.3" fill="none" stroke="#fff" stroke-width="0.8"/></svg>
<div style="position:absolute;left:1004.80px;top:152.64px;line-height:80px;font-size:24.80px;color:#fff;font-weight:bold;white-space:nowrap;transform:scale(0.25);transform-origin:0 50%;">删除</div>
<div style="position:absolute;left:169.70px;top:167.88px;width:136.77px;text-align:center;line-height:80px;font-size:33.60px;color:#666;font-weight:normal;white-space:nowrap;transform:scale(0.2325,0.25);transform-origin:0 50%;">3</div>
<div style="position:absolute;left:265.00px;top:168.38px;width:254.00px;text-align:center;line-height:80px;font-size:29.60px;color:#666;font-weight:normal;white-space:nowrap;transform:scale(0.2500,0.25);transform-origin:0 50%;">女</div>
<div style="position:absolute;left:328.50px;top:168.38px;width:316.00px;text-align:center;line-height:80px;font-size:29.60px;color:#666;font-weight:normal;white-space:nowrap;transform:scale(0.2500,0.25);transform-origin:0 50%;">司法警察</div>
<div style="position:absolute;left:407.50px;top:168.38px;width:252.00px;text-align:center;line-height:80px;font-size:29.60px;color:#666;font-weight:normal;white-space:nowrap;transform:scale(0.2500,0.25);transform-origin:0 50%;">党员</div>
<div style="position:absolute;left:470.50px;top:167.88px;width:295.48px;text-align:center;line-height:80px;font-size:33.60px;color:#666;font-weight:normal;white-space:nowrap;transform:scale(0.2325,0.25);transform-origin:0 50%;">1965-11-01</div>
<div style="position:absolute;left:634.40px;top:167.88px;width:292.04px;text-align:center;line-height:80px;font-size:33.60px;color:#666;font-weight:normal;white-space:nowrap;transform:scale(0.2325,0.25);transform-origin:0 50%;">2007-03-13</div>
<div style="position:absolute;left:702.30px;top:168.38px;width:380.80px;text-align:center;line-height:80px;font-size:29.60px;color:#666;font-weight:normal;white-space:nowrap;transform:scale(0.2500,0.25);transform-origin:0 50%;">一督</div>
<div style="position:absolute;left:797.50px;top:167.88px;width:382.80px;text-align:center;line-height:80px;font-size:33.60px;color:#666;font-weight:normal;white-space:nowrap;transform:scale(0.2325,0.25);transform-origin:0 50%;">2019-04-01</div>
<div style="position:absolute;left:886.50px;top:167.88px;width:276.13px;text-align:center;line-height:80px;font-size:33.60px;color:#666;font-weight:normal;white-space:nowrap;transform:scale(0.2325,0.25);transform-origin:0 50%;">-362</div>
<div style="position:absolute;left:221.50px;top:202.57px;width:6.15px;height:5.60px;background:rgba(110,95,70,0.18)"></div>
<div style="position:absolute;left:227.65px;top:202.57px;width:6.15px;height:5.60px;background:rgba(110,95,70,0.22)"></div>
<div style="position:absolute;left:233.80px;top:202.57px;width:6.15px;height:5.60px;background:rgba(110,95,70,0.4)"></div>
<div style="position:absolute;left:239.95px;top:202.57px;width:6.15px;height:5.60px;background:rgba(110,95,70,0.18)"></div>
<div style="position:absolute;left:221.50px;top:208.17px;width:6.15px;height:5.60px;background:rgba(110,95,70,0.05)"></div>
<div style="position:absolute;left:227.65px;top:208.17px;width:6.15px;height:5.60px;background:rgba(110,95,70,0.05)"></div>
<div style="position:absolute;left:233.80px;top:208.17px;width:6.15px;height:5.60px;background:rgba(110,95,70,0.05)"></div>
<div style="position:absolute;left:239.95px;top:208.17px;width:6.15px;height:5.60px;background:rgba(110,95,70,0.05)"></div>
<div style="position:absolute;left:959.60px;top:202.88px;width:26.40px;height:11.40px;background:#1e9bf0;border-radius:1.5px"></div>
<svg style="position:absolute;left:963.50px;top:205.18px" width="6" height="6" viewBox="0 0 6 6"><path d="M0.8 5.2 L4.8 1.2" stroke="#fff" stroke-width="1.1"/></svg>
<div style="position:absolute;left:970.50px;top:168.88px;line-height:80px;font-size:24.80px;color:#fff;font-weight:bold;white-space:nowrap;transform:scale(0.25);transform-origin:0 50%;">编辑</div>
<div style="position:absolute;left:993.70px;top:202.88px;width:27.20px;height:11.40px;background:#fb5521;border-radius:2px"></div>
<svg style="position:absolute;left:997.30px;top:205.18px" width="7" height="7" viewBox="0 0 7 7"><path d="M0.6 1.3 H6.2 M1.3 1.3 V6 H5.5 V1.3 M2.6 2.5 V5 M4.2 2.5 V5 M2.5 0.6 H4.3" fill="none" stroke="#fff" stroke-width="0.8"/></svg>
<div style="position:absolute;left:1004.80px;top:168.88px;line-height:80px;font-size:24.80px;color:#fff;font-weight:bold;white-space:nowrap;transform:scale(0.25);transform-origin:0 50%;">删除</div>
<div style="position:absolute;left:169.70px;top:184.11px;width:136.77px;text-align:center;line-height:80px;font-size:33.60px;color:#666;font-weight:normal;white-space:nowrap;transform:scale(0.2325,0.25);transform-origin:0 50%;">4</div>
<div style="position:absolute;left:265.00px;top:184.61px;width:254.00px;text-align:center;line-height:80px;font-size:29.60px;color:#666;font-weight:normal;white-space:nowrap;transform:scale(0.2500,0.25);transform-origin:0 50%;">男</div>
<div style="position:absolute;left:328.50px;top:184.61px;width:316.00px;text-align:center;line-height:80px;font-size:29.60px;color:#666;font-weight:normal;white-space:nowrap;transform:scale(0.2500,0.25);transform-origin:0 50%;">司法警察</div>
<div style="position:absolute;left:407.50px;top:184.61px;width:252.00px;text-align:center;line-height:80px;font-size:29.60px;color:#666;font-weight:normal;white-space:nowrap;transform:scale(0.2500,0.25);transform-origin:0 50%;">党员</div>
<div style="position:absolute;left:470.50px;top:184.11px;width:295.48px;text-align:center;line-height:80px;font-size:33.60px;color:#666;font-weight:normal;white-space:nowrap;transform:scale(0.2325,0.25);transform-origin:0 50%;">1964-03-01</div>
<div style="position:absolute;left:634.40px;top:184.11px;width:292.04px;text-align:center;line-height:80px;font-size:33.60px;color:#666;font-weight:normal;white-space:nowrap;transform:scale(0.2325,0.25);transform-origin:0 50%;">2006-02-15</div>
<div style="position:absolute;left:702.30px;top:184.61px;width:380.80px;text-align:center;line-height:80px;font-size:29.60px;color:#666;font-weight:normal;white-space:nowrap;transform:scale(0.2500,0.25);transform-origin:0 50%;">二督</div>
<div style="position:absolute;left:797.50px;top:184.11px;width:382.80px;text-align:center;line-height:80px;font-size:33.60px;color:#666;font-weight:normal;white-space:nowrap;transform:scale(0.2325,0.25);transform-origin:0 50%;">2019-04-01</div>
<div style="position:absolute;left:886.50px;top:184.11px;width:276.13px;text-align:center;line-height:80px;font-size:33.60px;color:#666;font-weight:normal;white-space:nowrap;transform:scale(0.2325,0.25);transform-origin:0 50%;">-362</div>
<div style="position:absolute;left:221.50px;top:218.81px;width:6.15px;height:5.60px;background:rgba(110,95,70,0.08)"></div>
<div style="position:absolute;left:227.65px;top:218.81px;width:6.15px;height:5.60px;background:rgba(110,95,70,0.08)"></div>
<div style="position:absolute;left:233.80px;top:218.81px;width:6.15px;height:5.60px;background:rgba(110,95,70,0.08)"></div>
<div style="position:absolute;left:239.95px;top:218.81px;width:6.15px;height:5.60px;background:rgba(110,95,70,0.08)"></div>
<div style="position:absolute;left:221.50px;top:224.41px;width:6.15px;height:5.60px;background:rgba(110,95,70,0.3)"></div>
<div style="position:absolute;left:227.65px;top:224.41px;width:6.15px;height:5.60px;background:rgba(110,95,70,0.3)"></div>
<div style="position:absolute;left:233.80px;top:224.41px;width:6.15px;height:5.60px;background:rgba(110,95,70,0.3)"></div>
<div style="position:absolute;left:239.95px;top:224.41px;width:6.15px;height:5.60px;background:rgba(110,95,70,0.3)"></div>
<div style="position:absolute;left:959.60px;top:219.11px;width:26.40px;height:11.40px;background:#1e9bf0;border-radius:1.5px"></div>
<svg style="position:absolute;left:963.50px;top:221.41px" width="6" height="6" viewBox="0 0 6 6"><path d="M0.8 5.2 L4.8 1.2" stroke="#fff" stroke-width="1.1"/></svg>
<div style="position:absolute;left:970.50px;top:185.11px;line-height:80px;font-size:24.80px;color:#fff;font-weight:bold;white-space:nowrap;transform:scale(0.25);transform-origin:0 50%;">编辑</div>
<div style="position:absolute;left:993.70px;top:219.11px;width:27.20px;height:11.40px;background:#fb5521;border-radius:2px"></div>
<svg style="position:absolute;left:997.30px;top:221.41px" width="7" height="7" viewBox="0 0 7 7"><path d="M0.6 1.3 H6.2 M1.3 1.3 V6 H5.5 V1.3 M2.6 2.5 V5 M4.2 2.5 V5 M2.5 0.6 H4.3" fill="none" stroke="#fff" stroke-width="0.8"/></svg>
<div style="position:absolute;left:1004.80px;top:185.11px;line-height:80px;font-size:24.80px;color:#fff;font-weight:bold;white-space:nowrap;transform:scale(0.25);transform-origin:0 50%;">删除</div>
<div style="position:absolute;left:169.70px;top:200.34px;width:136.77px;text-align:center;line-height:80px;font-size:33.60px;color:#666;font-weight:normal;white-space:nowrap;transform:scale(0.2325,0.25);transform-origin:0 50%;">5</div>
<div style="position:absolute;left:265.00px;top:200.84px;width:254.00px;text-align:center;line-height:80px;font-size:29.60px;color:#666;font-weight:normal;white-space:nowrap;transform:scale(0.2500,0.25);transform-origin:0 50%;">男</div>
<div style="position:absolute;left:328.50px;top:200.84px;width:316.00px;text-align:center;line-height:80px;font-size:29.60px;color:#666;font-weight:normal;white-space:nowrap;transform:scale(0.2500,0.25);transform-origin:0 50%;">司法警察</div>
<div style="position:absolute;left:407.50px;top:200.84px;width:252.00px;text-align:center;line-height:80px;font-size:29.60px;color:#666;font-weight:normal;white-space:nowrap;transform:scale(0.2500,0.25);transform-origin:0 50%;">党员</div>
<div style="position:absolute;left:470.50px;top:200.34px;width:295.48px;text-align:center;line-height:80px;font-size:33.60px;color:#666;font-weight:normal;white-space:nowrap;transform:scale(0.2325,0.25);transform-origin:0 50%;">1966-08-01</div>
<div style="position:absolute;left:634.40px;top:200.34px;width:292.04px;text-align:center;line-height:80px;font-size:33.60px;color:#666;font-weight:normal;white-space:nowrap;transform:scale(0.2325,0.25);transform-origin:0 50%;">1905-06-28</div>
<div style="position:absolute;left:702.30px;top:200.84px;width:380.80px;text-align:center;line-height:80px;font-size:29.60px;color:#666;font-weight:normal;white-space:nowrap;transform:scale(0.2500,0.25);transform-origin:0 50%;">二督</div>
<div style="position:absolute;left:797.50px;top:200.34px;width:382.80px;text-align:center;line-height:80px;font-size:33.60px;color:#666;font-weight:normal;white-space:nowrap;transform:scale(0.2325,0.25);transform-origin:0 50%;">2019-04-01</div>
<div style="position:absolute;left:886.50px;top:200.34px;width:276.13px;text-align:center;line-height:80px;font-size:33.60px;color:#666;font-weight:normal;white-space:nowrap;transform:scale(0.2325,0.25);transform-origin:0 50%;">-362</div>
<div style="position:absolute;left:221.50px;top:235.04px;width:6.15px;height:5.60px;background:rgba(110,95,70,0.3)"></div>
<div style="position:absolute;left:227.65px;top:235.04px;width:6.15px;height:5.60px;background:rgba(110,95,70,0.3)"></div>
<div style="position:absolute;left:233.80px;top:235.04px;width:6.15px;height:5.60px;background:rgba(110,95,70,0.3)"></div>
<div style="position:absolute;left:239.95px;top:235.04px;width:6.15px;height:5.60px;background:rgba(110,95,70,0.1)"></div>
<div style="position:absolute;left:221.50px;top:240.64px;width:6.15px;height:5.60px;background:rgba(110,95,70,0.14)"></div>
<div style="position:absolute;left:227.65px;top:240.64px;width:6.15px;height:5.60px;background:rgba(110,95,70,0.14)"></div>
<div style="position:absolute;left:233.80px;top:240.64px;width:6.15px;height:5.60px;background:rgba(110,95,70,0.14)"></div>
<div style="position:absolute;left:239.95px;top:240.64px;width:6.15px;height:5.60px;background:rgba(110,95,70,0.1)"></div>
<div style="position:absolute;left:959.60px;top:235.34px;width:26.40px;height:11.40px;background:#1e9bf0;border-radius:1.5px"></div>
<svg style="position:absolute;left:963.50px;top:237.64px" width="6" height="6" viewBox="0 0 6 6"><path d="M0.8 5.2 L4.8 1.2" stroke="#fff" stroke-width="1.1"/></svg>
<div style="position:absolute;left:970.50px;top:201.34px;line-height:80px;font-size:24.80px;color:#fff;font-weight:bold;white-space:nowrap;transform:scale(0.25);transform-origin:0 50%;">编辑</div>
<div style="position:absolute;left:993.70px;top:235.34px;width:27.20px;height:11.40px;background:#fb5521;border-radius:2px"></div>
<svg style="position:absolute;left:997.30px;top:237.64px" width="7" height="7" viewBox="0 0 7 7"><path d="M0.6 1.3 H6.2 M1.3 1.3 V6 H5.5 V1.3 M2.6 2.5 V5 M4.2 2.5 V5 M2.5 0.6 H4.3" fill="none" stroke="#fff" stroke-width="0.8"/></svg>
<div style="position:absolute;left:1004.80px;top:201.34px;line-height:80px;font-size:24.80px;color:#fff;font-weight:bold;white-space:nowrap;transform:scale(0.25);transform-origin:0 50%;">删除</div>
<div style="position:absolute;left:169.70px;top:216.56px;width:136.77px;text-align:center;line-height:80px;font-size:33.60px;color:#666;font-weight:normal;white-space:nowrap;transform:scale(0.2325,0.25);transform-origin:0 50%;">6</div>
<div style="position:absolute;left:265.00px;top:217.06px;width:254.00px;text-align:center;line-height:80px;font-size:29.60px;color:#666;font-weight:normal;white-space:nowrap;transform:scale(0.2500,0.25);transform-origin:0 50%;">男</div>
<div style="position:absolute;left:328.50px;top:217.06px;width:316.00px;text-align:center;line-height:80px;font-size:29.60px;color:#666;font-weight:normal;white-space:nowrap;transform:scale(0.2500,0.25);transform-origin:0 50%;">司法警察</div>
<div style="position:absolute;left:407.50px;top:217.06px;width:252.00px;text-align:center;line-height:80px;font-size:29.60px;color:#666;font-weight:normal;white-space:nowrap;transform:scale(0.2500,0.25);transform-origin:0 50%;">党员</div>
<div style="position:absolute;left:470.50px;top:216.56px;width:295.48px;text-align:center;line-height:80px;font-size:33.60px;color:#666;font-weight:normal;white-space:nowrap;transform:scale(0.2325,0.25);transform-origin:0 50%;">1972-09-01</div>
<div style="position:absolute;left:634.40px;top:216.56px;width:292.04px;text-align:center;line-height:80px;font-size:33.60px;color:#666;font-weight:normal;white-space:nowrap;transform:scale(0.2325,0.25);transform-origin:0 50%;">1905-07-01</div>
<div style="position:absolute;left:702.30px;top:217.06px;width:380.80px;text-align:center;line-height:80px;font-size:29.60px;color:#666;font-weight:normal;white-space:nowrap;transform:scale(0.2500,0.25);transform-origin:0 50%;">二督</div>
<div style="position:absolute;left:797.50px;top:216.56px;width:382.80px;text-align:center;line-height:80px;font-size:33.60px;color:#666;font-weight:normal;white-space:nowrap;transform:scale(0.2325,0.25);transform-origin:0 50%;">2019-04-01</div>
<div style="position:absolute;left:886.50px;top:216.56px;width:276.13px;text-align:center;line-height:80px;font-size:33.60px;color:#666;font-weight:normal;white-space:nowrap;transform:scale(0.2325,0.25);transform-origin:0 50%;">-362</div>
<div style="position:absolute;left:221.50px;top:251.26px;width:6.15px;height:5.60px;background:rgba(110,95,70,0.02)"></div>
<div style="position:absolute;left:227.65px;top:251.26px;width:6.15px;height:5.60px;background:rgba(110,95,70,0.02)"></div>
<div style="position:absolute;left:233.80px;top:251.26px;width:6.15px;height:5.60px;background:rgba(110,95,70,0.02)"></div>
<div style="position:absolute;left:221.50px;top:256.87px;width:6.15px;height:5.60px;background:rgba(110,95,70,0.35)"></div>
<div style="position:absolute;left:227.65px;top:256.87px;width:6.15px;height:5.60px;background:rgba(110,95,70,0.3)"></div>
<div style="position:absolute;left:233.80px;top:256.87px;width:6.15px;height:5.60px;background:rgba(110,95,70,0.28)"></div>
<div style="position:absolute;left:239.95px;top:256.87px;width:6.15px;height:5.60px;background:rgba(110,95,70,0.12)"></div>
<div style="position:absolute;left:959.60px;top:251.56px;width:26.40px;height:11.40px;background:#1e9bf0;border-radius:1.5px"></div>
<svg style="position:absolute;left:963.50px;top:253.87px" width="6" height="6" viewBox="0 0 6 6"><path d="M0.8 5.2 L4.8 1.2" stroke="#fff" stroke-width="1.1"/></svg>
<div style="position:absolute;left:970.50px;top:217.56px;line-height:80px;font-size:24.80px;color:#fff;font-weight:bold;white-space:nowrap;transform:scale(0.25);transform-origin:0 50%;">编辑</div>
<div style="position:absolute;left:993.70px;top:251.56px;width:27.20px;height:11.40px;background:#fb5521;border-radius:2px"></div>
<svg style="position:absolute;left:997.30px;top:253.87px" width="7" height="7" viewBox="0 0 7 7"><path d="M0.6 1.3 H6.2 M1.3 1.3 V6 H5.5 V1.3 M2.6 2.5 V5 M4.2 2.5 V5 M2.5 0.6 H4.3" fill="none" stroke="#fff" stroke-width="0.8"/></svg>
<div style="position:absolute;left:1004.80px;top:217.56px;line-height:80px;font-size:24.80px;color:#fff;font-weight:bold;white-space:nowrap;transform:scale(0.25);transform-origin:0 50%;">删除</div>
<div style="position:absolute;left:169.70px;top:232.80px;width:136.77px;text-align:center;line-height:80px;font-size:33.60px;color:#666;font-weight:normal;white-space:nowrap;transform:scale(0.2325,0.25);transform-origin:0 50%;">7</div>
<div style="position:absolute;left:265.00px;top:233.30px;width:254.00px;text-align:center;line-height:80px;font-size:29.60px;color:#666;font-weight:normal;white-space:nowrap;transform:scale(0.2500,0.25);transform-origin:0 50%;">女</div>
<div style="position:absolute;left:328.50px;top:233.30px;width:316.00px;text-align:center;line-height:80px;font-size:29.60px;color:#666;font-weight:normal;white-space:nowrap;transform:scale(0.2500,0.25);transform-origin:0 50%;">司法警察</div>
<div style="position:absolute;left:407.50px;top:233.30px;width:252.00px;text-align:center;line-height:80px;font-size:29.60px;color:#666;font-weight:normal;white-space:nowrap;transform:scale(0.2500,0.25);transform-origin:0 50%;">党员</div>
<div style="position:absolute;left:470.50px;top:232.80px;width:295.48px;text-align:center;line-height:80px;font-size:33.60px;color:#666;font-weight:normal;white-space:nowrap;transform:scale(0.2325,0.25);transform-origin:0 50%;">1974-01-01</div>
<div style="position:absolute;left:634.40px;top:232.80px;width:292.04px;text-align:center;line-height:80px;font-size:33.60px;color:#666;font-weight:normal;white-space:nowrap;transform:scale(0.2325,0.25);transform-origin:0 50%;">1995-09-01</div>
<div style="position:absolute;left:702.30px;top:233.30px;width:380.80px;text-align:center;line-height:80px;font-size:29.60px;color:#666;font-weight:normal;white-space:nowrap;transform:scale(0.2500,0.25);transform-origin:0 50%;">二督</div>
<div style="position:absolute;left:797.50px;top:232.80px;width:382.80px;text-align:center;line-height:80px;font-size:33.60px;color:#666;font-weight:normal;white-space:nowrap;transform:scale(0.2325,0.25);transform-origin:0 50%;">2019-04-01</div>
<div style="position:absolute;left:886.50px;top:232.80px;width:276.13px;text-align:center;line-height:80px;font-size:33.60px;color:#666;font-weight:normal;white-space:nowrap;transform:scale(0.2325,0.25);transform-origin:0 50%;">-362</div>
<div style="position:absolute;left:221.50px;top:267.50px;width:6.15px;height:5.60px;background:rgba(110,95,70,0.18)"></div>
<div style="position:absolute;left:227.65px;top:267.50px;width:6.15px;height:5.60px;background:rgba(110,95,70,0.24)"></div>
<div style="position:absolute;left:233.80px;top:267.50px;width:6.15px;height:5.60px;background:rgba(110,95,70,0.24)"></div>
<div style="position:absolute;left:239.95px;top:267.50px;width:6.15px;height:5.60px;background:rgba(110,95,70,0.12)"></div>
<div style="position:absolute;left:221.50px;top:273.10px;width:6.15px;height:5.60px;background:rgba(110,95,70,0.26)"></div>
<div style="position:absolute;left:227.65px;top:273.10px;width:6.15px;height:5.60px;background:rgba(110,95,70,0.3)"></div>
<div style="position:absolute;left:233.80px;top:273.10px;width:6.15px;height:5.60px;background:rgba(110,95,70,0.24)"></div>
<div style="position:absolute;left:239.95px;top:273.10px;width:6.15px;height:5.60px;background:rgba(110,95,70,0.12)"></div>
<div style="position:absolute;left:959.60px;top:267.80px;width:26.40px;height:11.40px;background:#1e9bf0;border-radius:1.5px"></div>
<svg style="position:absolute;left:963.50px;top:270.10px" width="6" height="6" viewBox="0 0 6 6"><path d="M0.8 5.2 L4.8 1.2" stroke="#fff" stroke-width="1.1"/></svg>
<div style="position:absolute;left:970.50px;top:233.80px;line-height:80px;font-size:24.80px;color:#fff;font-weight:bold;white-space:nowrap;transform:scale(0.25);transform-origin:0 50%;">编辑</div>
<div style="position:absolute;left:993.70px;top:267.80px;width:27.20px;height:11.40px;background:#fb5521;border-radius:2px"></div>
<svg style="position:absolute;left:997.30px;top:270.10px" width="7" height="7" viewBox="0 0 7 7"><path d="M0.6 1.3 H6.2 M1.3 1.3 V6 H5.5 V1.3 M2.6 2.5 V5 M4.2 2.5 V5 M2.5 0.6 H4.3" fill="none" stroke="#fff" stroke-width="0.8"/></svg>
<div style="position:absolute;left:1004.80px;top:233.80px;line-height:80px;font-size:24.80px;color:#fff;font-weight:bold;white-space:nowrap;transform:scale(0.25);transform-origin:0 50%;">删除</div>
<div style="position:absolute;left:169.70px;top:249.03px;width:136.77px;text-align:center;line-height:80px;font-size:33.60px;color:#666;font-weight:normal;white-space:nowrap;transform:scale(0.2325,0.25);transform-origin:0 50%;">8</div>
<div style="position:absolute;left:265.00px;top:249.53px;width:254.00px;text-align:center;line-height:80px;font-size:29.60px;color:#666;font-weight:normal;white-space:nowrap;transform:scale(0.2500,0.25);transform-origin:0 50%;">男</div>
<div style="position:absolute;left:328.50px;top:249.53px;width:316.00px;text-align:center;line-height:80px;font-size:29.60px;color:#666;font-weight:normal;white-space:nowrap;transform:scale(0.2500,0.25);transform-origin:0 50%;">司法警察</div>
<div style="position:absolute;left:407.50px;top:249.53px;width:252.00px;text-align:center;line-height:80px;font-size:29.60px;color:#666;font-weight:normal;white-space:nowrap;transform:scale(0.2500,0.25);transform-origin:0 50%;">群众</div>
<div style="position:absolute;left:470.50px;top:249.03px;width:295.48px;text-align:center;line-height:80px;font-size:33.60px;color:#666;font-weight:normal;white-space:nowrap;transform:scale(0.2325,0.25);transform-origin:0 50%;">1971-01-01</div>
<div style="position:absolute;left:634.40px;top:249.03px;width:292.04px;text-align:center;line-height:80px;font-size:33.60px;color:#666;font-weight:normal;white-space:nowrap;transform:scale(0.2325,0.25);transform-origin:0 50%;">1995-08-01</div>
<div style="position:absolute;left:702.30px;top:249.53px;width:380.80px;text-align:center;line-height:80px;font-size:29.60px;color:#666;font-weight:normal;white-space:nowrap;transform:scale(0.2500,0.25);transform-origin:0 50%;">二督</div>
<div style="position:absolute;left:797.50px;top:249.03px;width:382.80px;text-align:center;line-height:80px;font-size:33.60px;color:#666;font-weight:normal;white-space:nowrap;transform:scale(0.2325,0.25);transform-origin:0 50%;">2019-04-01</div>
<div style="position:absolute;left:886.50px;top:249.03px;width:276.13px;text-align:center;line-height:80px;font-size:33.60px;color:#666;font-weight:normal;white-space:nowrap;transform:scale(0.2325,0.25);transform-origin:0 50%;">-362</div>
<div style="position:absolute;left:221.50px;top:283.73px;width:6.15px;height:5.60px;background:rgba(110,95,70,0.02)"></div>
<div style="position:absolute;left:227.65px;top:283.73px;width:6.15px;height:5.60px;background:rgba(110,95,70,0.02)"></div>
<div style="position:absolute;left:233.80px;top:283.73px;width:6.15px;height:5.60px;background:rgba(110,95,70,0.02)"></div>
<div style="position:absolute;left:239.95px;top:283.73px;width:6.15px;height:5.60px;background:rgba(110,95,70,0.02)"></div>
<div style="position:absolute;left:221.50px;top:289.33px;width:6.15px;height:5.60px;background:rgba(110,95,70,0.34)"></div>
<div style="position:absolute;left:227.65px;top:289.33px;width:6.15px;height:5.60px;background:rgba(110,95,70,0.3)"></div>
<div style="position:absolute;left:233.80px;top:289.33px;width:6.15px;height:5.60px;background:rgba(110,95,70,0.3)"></div>
<div style="position:absolute;left:239.95px;top:289.33px;width:6.15px;height:5.60px;background:rgba(110,95,70,0.18)"></div>
<div style="position:absolute;left:959.60px;top:284.03px;width:26.40px;height:11.40px;background:#1e9bf0;border-radius:1.5px"></div>
<svg style="position:absolute;left:963.50px;top:286.33px" width="6" height="6" viewBox="0 0 6 6"><path d="M0.8 5.2 L4.8 1.2" stroke="#fff" stroke-width="1.1"/></svg>
<div style="position:absolute;left:970.50px;top:250.03px;line-height:80px;font-size:24.80px;color:#fff;font-weight:bold;white-space:nowrap;transform:scale(0.25);transform-origin:0 50%;">编辑</div>
<div style="position:absolute;left:993.70px;top:284.03px;width:27.20px;height:11.40px;background:#fb5521;border-radius:2px"></div>
<svg style="position:absolute;left:997.30px;top:286.33px" width="7" height="7" viewBox="0 0 7 7"><path d="M0.6 1.3 H6.2 M1.3 1.3 V6 H5.5 V1.3 M2.6 2.5 V5 M4.2 2.5 V5 M2.5 0.6 H4.3" fill="none" stroke="#fff" stroke-width="0.8"/></svg>
<div style="position:absolute;left:1004.80px;top:250.03px;line-height:80px;font-size:24.80px;color:#fff;font-weight:bold;white-space:nowrap;transform:scale(0.25);transform-origin:0 50%;">删除</div>
<div style="position:absolute;left:169.70px;top:265.25px;width:136.77px;text-align:center;line-height:80px;font-size:33.60px;color:#666;font-weight:normal;white-space:nowrap;transform:scale(0.2325,0.25);transform-origin:0 50%;">9</div>
<div style="position:absolute;left:265.00px;top:265.75px;width:254.00px;text-align:center;line-height:80px;font-size:29.60px;color:#666;font-weight:normal;white-space:nowrap;transform:scale(0.2500,0.25);transform-origin:0 50%;">男</div>
<div style="position:absolute;left:328.50px;top:265.75px;width:316.00px;text-align:center;line-height:80px;font-size:29.60px;color:#666;font-weight:normal;white-space:nowrap;transform:scale(0.2500,0.25);transform-origin:0 50%;">司法警察</div>
<div style="position:absolute;left:407.50px;top:265.75px;width:252.00px;text-align:center;line-height:80px;font-size:29.60px;color:#666;font-weight:normal;white-space:nowrap;transform:scale(0.2500,0.25);transform-origin:0 50%;">党员</div>
<div style="position:absolute;left:470.50px;top:265.25px;width:295.48px;text-align:center;line-height:80px;font-size:33.60px;color:#666;font-weight:normal;white-space:nowrap;transform:scale(0.2325,0.25);transform-origin:0 50%;">1982-10-01</div>
<div style="position:absolute;left:634.40px;top:265.25px;width:292.04px;text-align:center;line-height:80px;font-size:33.60px;color:#666;font-weight:normal;white-space:nowrap;transform:scale(0.2325,0.25);transform-origin:0 50%;">1905-07-03</div>
<div style="position:absolute;left:702.30px;top:265.75px;width:380.80px;text-align:center;line-height:80px;font-size:29.60px;color:#666;font-weight:normal;white-space:nowrap;transform:scale(0.2500,0.25);transform-origin:0 50%;">二督</div>
<div style="position:absolute;left:797.50px;top:265.25px;width:382.80px;text-align:center;line-height:80px;font-size:33.60px;color:#666;font-weight:normal;white-space:nowrap;transform:scale(0.2325,0.25);transform-origin:0 50%;">2019-04-01</div>
<div style="position:absolute;left:886.50px;top:265.25px;width:276.13px;text-align:center;line-height:80px;font-size:33.60px;color:#666;font-weight:normal;white-space:nowrap;transform:scale(0.2325,0.25);transform-origin:0 50%;">-362</div>
<div style="position:absolute;left:221.50px;top:299.95px;width:6.15px;height:5.60px;background:rgba(110,95,70,0.12)"></div>
<div style="position:absolute;left:227.65px;top:299.95px;width:6.15px;height:5.60px;background:rgba(110,95,70,0.12)"></div>
<div style="position:absolute;left:233.80px;top:299.95px;width:6.15px;height:5.60px;background:rgba(110,95,70,0.12)"></div>
<div style="position:absolute;left:239.95px;top:299.95px;width:6.15px;height:5.60px;background:rgba(110,95,70,0.12)"></div>
<div style="position:absolute;left:221.50px;top:305.56px;width:6.15px;height:5.60px;background:rgba(110,95,70,0.3)"></div>
<div style="position:absolute;left:227.65px;top:305.56px;width:6.15px;height:5.60px;background:rgba(110,95,70,0.3)"></div>
<div style="position:absolute;left:233.80px;top:305.56px;width:6.15px;height:5.60px;background:rgba(110,95,70,0.24)"></div>
<div style="position:absolute;left:239.95px;top:305.56px;width:6.15px;height:5.60px;background:rgba(110,95,70,0.12)"></div>
<div style="position:absolute;left:959.60px;top:300.25px;width:26.40px;height:11.40px;background:#1e9bf0;border-radius:1.5px"></div>
<svg style="position:absolute;left:963.50px;top:302.56px" width="6" height="6" viewBox="0 0 6 6"><path d="M0.8 5.2 L4.8 1.2" stroke="#fff" stroke-width="1.1"/></svg>
<div style="position:absolute;left:970.50px;top:266.25px;line-height:80px;font-size:24.80px;color:#fff;font-weight:bold;white-space:nowrap;transform:scale(0.25);transform-origin:0 50%;">编辑</div>
<div style="position:absolute;left:993.70px;top:300.25px;width:27.20px;height:11.40px;background:#fb5521;border-radius:2px"></div>
<svg style="position:absolute;left:997.30px;top:302.56px" width="7" height="7" viewBox="0 0 7 7"><path d="M0.6 1.3 H6.2 M1.3 1.3 V6 H5.5 V1.3 M2.6 2.5 V5 M4.2 2.5 V5 M2.5 0.6 H4.3" fill="none" stroke="#fff" stroke-width="0.8"/></svg>
<div style="position:absolute;left:1004.80px;top:266.25px;line-height:80px;font-size:24.80px;color:#fff;font-weight:bold;white-space:nowrap;transform:scale(0.25);transform-origin:0 50%;">删除</div>
<div style="position:absolute;left:169.70px;top:281.49px;width:136.77px;text-align:center;line-height:80px;font-size:33.60px;color:#666;font-weight:normal;white-space:nowrap;transform:scale(0.2325,0.25);transform-origin:0 50%;">10</div>
<div style="position:absolute;left:265.00px;top:281.99px;width:254.00px;text-align:center;line-height:80px;font-size:29.60px;color:#666;font-weight:normal;white-space:nowrap;transform:scale(0.2500,0.25);transform-origin:0 50%;">男</div>
<div style="position:absolute;left:328.50px;top:281.99px;width:316.00px;text-align:center;line-height:80px;font-size:29.60px;color:#666;font-weight:normal;white-space:nowrap;transform:scale(0.2500,0.25);transform-origin:0 50%;">司法警察</div>
<div style="position:absolute;left:407.50px;top:281.99px;width:252.00px;text-align:center;line-height:80px;font-size:29.60px;color:#666;font-weight:normal;white-space:nowrap;transform:scale(0.2500,0.25);transform-origin:0 50%;">党员</div>
<div style="position:absolute;left:470.50px;top:281.49px;width:295.48px;text-align:center;line-height:80px;font-size:33.60px;color:#666;font-weight:normal;white-space:nowrap;transform:scale(0.2325,0.25);transform-origin:0 50%;">1980-01-01</div>
<div style="position:absolute;left:634.40px;top:281.49px;width:292.04px;text-align:center;line-height:80px;font-size:33.60px;color:#666;font-weight:normal;white-space:nowrap;transform:scale(0.2325,0.25);transform-origin:0 50%;">2016-12-15</div>
<div style="position:absolute;left:702.30px;top:281.99px;width:380.80px;text-align:center;line-height:80px;font-size:29.60px;color:#666;font-weight:normal;white-space:nowrap;transform:scale(0.2500,0.25);transform-origin:0 50%;">三督</div>
<div style="position:absolute;left:797.50px;top:281.49px;width:382.80px;text-align:center;line-height:80px;font-size:33.60px;color:#666;font-weight:normal;white-space:nowrap;transform:scale(0.2325,0.25);transform-origin:0 50%;">2019-12-01</div>
<div style="position:absolute;left:886.50px;top:281.49px;width:276.13px;text-align:center;line-height:80px;font-size:33.60px;color:#666;font-weight:normal;white-space:nowrap;transform:scale(0.2325,0.25);transform-origin:0 50%;">-118</div>
<div style="position:absolute;left:221.50px;top:316.19px;width:6.15px;height:5.60px;background:rgba(110,95,70,0.1)"></div>
<div style="position:absolute;left:227.65px;top:316.19px;width:6.15px;height:5.60px;background:rgba(110,95,70,0.1)"></div>
<div style="position:absolute;left:233.80px;top:316.19px;width:6.15px;height:5.60px;background:rgba(110,95,70,0.1)"></div>
<div style="position:absolute;left:239.95px;top:316.19px;width:6.15px;height:5.60px;background:rgba(110,95,70,0.1)"></div>
<div style="position:absolute;left:221.50px;top:321.79px;width:6.15px;height:5.60px;background:rgba(110,95,70,0.22)"></div>
<div style="position:absolute;left:227.65px;top:321.79px;width:6.15px;height:5.60px;background:rgba(110,95,70,0.18)"></div>
<div style="position:absolute;left:233.80px;top:321.79px;width:6.15px;height:5.60px;background:rgba(110,95,70,0.18)"></div>
<div style="position:absolute;left:239.95px;top:321.79px;width:6.15px;height:5.60px;background:rgba(110,95,70,0.18)"></div>
<div style="position:absolute;left:959.60px;top:316.49px;width:26.40px;height:11.40px;background:#1e9bf0;border-radius:1.5px"></div>
<svg style="position:absolute;left:963.50px;top:318.79px" width="6" height="6" viewBox="0 0 6 6"><path d="M0.8 5.2 L4.8 1.2" stroke="#fff" stroke-width="1.1"/></svg>
<div style="position:absolute;left:970.50px;top:282.49px;line-height:80px;font-size:24.80px;color:#fff;font-weight:bold;white-space:nowrap;transform:scale(0.25);transform-origin:0 50%;">编辑</div>
<div style="position:absolute;left:993.70px;top:316.49px;width:27.20px;height:11.40px;background:#fb5521;border-radius:2px"></div>
<svg style="position:absolute;left:997.30px;top:318.79px" width="7" height="7" viewBox="0 0 7 7"><path d="M0.6 1.3 H6.2 M1.3 1.3 V6 H5.5 V1.3 M2.6 2.5 V5 M4.2 2.5 V5 M2.5 0.6 H4.3" fill="none" stroke="#fff" stroke-width="0.8"/></svg>
<div style="position:absolute;left:1004.80px;top:282.49px;line-height:80px;font-size:24.80px;color:#fff;font-weight:bold;white-space:nowrap;transform:scale(0.25);transform-origin:0 50%;">删除</div>
<div style="position:absolute;left:169.70px;top:297.72px;width:136.77px;text-align:center;line-height:80px;font-size:33.60px;color:#666;font-weight:normal;white-space:nowrap;transform:scale(0.2325,0.25);transform-origin:0 50%;">11</div>
<div style="position:absolute;left:265.00px;top:298.22px;width:254.00px;text-align:center;line-height:80px;font-size:29.60px;color:#666;font-weight:normal;white-space:nowrap;transform:scale(0.2500,0.25);transform-origin:0 50%;">男</div>
<div style="position:absolute;left:328.50px;top:298.22px;width:316.00px;text-align:center;line-height:80px;font-size:29.60px;color:#666;font-weight:normal;white-space:nowrap;transform:scale(0.2500,0.25);transform-origin:0 50%;">大队长</div>
<div style="position:absolute;left:407.50px;top:298.22px;width:252.00px;text-align:center;line-height:80px;font-size:29.60px;color:#666;font-weight:normal;white-space:nowrap;transform:scale(0.2500,0.25);transform-origin:0 50%;">党员</div>
<div style="position:absolute;left:470.50px;top:297.72px;width:295.48px;text-align:center;line-height:80px;font-size:33.60px;color:#666;font-weight:normal;white-space:nowrap;transform:scale(0.2325,0.25);transform-origin:0 50%;">1981-02-01</div>
<div style="position:absolute;left:634.40px;top:297.72px;width:292.04px;text-align:center;line-height:80px;font-size:33.60px;color:#666;font-weight:normal;white-space:nowrap;transform:scale(0.2325,0.25);transform-origin:0 50%;">2009-02-09</div>
<div style="position:absolute;left:702.30px;top:298.22px;width:380.80px;text-align:center;line-height:80px;font-size:29.60px;color:#666;font-weight:normal;white-space:nowrap;transform:scale(0.2500,0.25);transform-origin:0 50%;">二督</div>
<div style="position:absolute;left:797.50px;top:297.72px;width:382.80px;text-align:center;line-height:80px;font-size:33.60px;color:#666;font-weight:normal;white-space:nowrap;transform:scale(0.2325,0.25);transform-origin:0 50%;">2020-09-01</div>
<div style="position:absolute;left:886.50px;top:297.72px;width:276.13px;text-align:center;line-height:80px;font-size:33.60px;color:#666;font-weight:normal;white-space:nowrap;transform:scale(0.2325,0.25);transform-origin:0 50%;">157</div>
<div style="position:absolute;left:221.50px;top:338.02px;width:6.15px;height:5.60px;background:rgba(120,120,120,0.05)"></div>
<div style="position:absolute;left:227.65px;top:338.02px;width:6.15px;height:5.60px;background:rgba(120,120,120,0.3)"></div>
<div style="position:absolute;left:233.80px;top:338.02px;width:6.15px;height:5.60px;background:rgba(120,120,120,0.42)"></div>
<div style="position:absolute;left:239.95px;top:338.02px;width:6.15px;height:5.60px;background:rgba(120,120,120,0.02)"></div>
<div style="position:absolute;left:959.60px;top:332.72px;width:26.40px;height:11.40px;background:#1e9bf0;border-radius:1.5px"></div>
<svg style="position:absolute;left:963.50px;top:335.02px" width="6" height="6" viewBox="0 0 6 6"><path d="M0.8 5.2 L4.8 1.2" stroke="#fff" stroke-width="1.1"/></svg>
<div style="position:absolute;left:970.50px;top:298.72px;line-height:80px;font-size:24.80px;color:#fff;font-weight:bold;white-space:nowrap;transform:scale(0.25);transform-origin:0 50%;">编辑</div>
<div style="position:absolute;left:993.70px;top:332.72px;width:27.20px;height:11.40px;background:#fb5521;border-radius:2px"></div>
<svg style="position:absolute;left:997.30px;top:335.02px" width="7" height="7" viewBox="0 0 7 7"><path d="M0.6 1.3 H6.2 M1.3 1.3 V6 H5.5 V1.3 M2.6 2.5 V5 M4.2 2.5 V5 M2.5 0.6 H4.3" fill="none" stroke="#fff" stroke-width="0.8"/></svg>
<div style="position:absolute;left:1004.80px;top:298.72px;line-height:80px;font-size:24.80px;color:#fff;font-weight:bold;white-space:nowrap;transform:scale(0.25);transform-origin:0 50%;">删除</div>
<div style="position:absolute;left:169.70px;top:313.95px;width:136.77px;text-align:center;line-height:80px;font-size:33.60px;color:#666;font-weight:normal;white-space:nowrap;transform:scale(0.2325,0.25);transform-origin:0 50%;">12</div>
<div style="position:absolute;left:265.00px;top:314.45px;width:254.00px;text-align:center;line-height:80px;font-size:29.60px;color:#666;font-weight:normal;white-space:nowrap;transform:scale(0.2500,0.25);transform-origin:0 50%;">男</div>
<div style="position:absolute;left:328.50px;top:314.45px;width:316.00px;text-align:center;line-height:80px;font-size:29.60px;color:#666;font-weight:normal;white-space:nowrap;transform:scale(0.2500,0.25);transform-origin:0 50%;">司法警察</div>
<div style="position:absolute;left:407.50px;top:314.45px;width:252.00px;text-align:center;line-height:80px;font-size:29.60px;color:#666;font-weight:normal;white-space:nowrap;transform:scale(0.2500,0.25);transform-origin:0 50%;">党员</div>
<div style="position:absolute;left:470.50px;top:313.95px;width:295.48px;text-align:center;line-height:80px;font-size:33.60px;color:#666;font-weight:normal;white-space:nowrap;transform:scale(0.2325,0.25);transform-origin:0 50%;">1996-03-01</div>
<div style="position:absolute;left:634.40px;top:313.95px;width:292.04px;text-align:center;line-height:80px;font-size:33.60px;color:#666;font-weight:normal;white-space:nowrap;transform:scale(0.2325,0.25);transform-origin:0 50%;">2021-11-01</div>
<div style="position:absolute;left:702.30px;top:314.45px;width:380.80px;text-align:center;line-height:80px;font-size:29.60px;color:#666;font-weight:normal;white-space:nowrap;transform:scale(0.2500,0.25);transform-origin:0 50%;">三司</div>
<div style="position:absolute;left:797.50px;top:313.95px;width:382.80px;text-align:center;line-height:80px;font-size:33.60px;color:#666;font-weight:normal;white-space:nowrap;transform:scale(0.2325,0.25);transform-origin:0 50%;">2021-11-01</div>
<div style="position:absolute;left:886.50px;top:313.95px;width:276.13px;text-align:center;line-height:80px;font-size:33.60px;color:#666;font-weight:normal;white-space:nowrap;transform:scale(0.2325,0.25);transform-origin:0 50%;">218</div>
<div style="position:absolute;left:227.65px;top:348.65px;width:6.15px;height:5.60px;background:rgba(120,120,120,0.12)"></div>
<div style="position:absolute;left:233.80px;top:348.65px;width:6.15px;height:5.60px;background:rgba(120,120,120,0.12)"></div>
<div style="position:absolute;left:221.50px;top:354.25px;width:6.15px;height:5.60px;background:rgba(120,120,120,0.02)"></div>
<div style="position:absolute;left:227.65px;top:354.25px;width:6.15px;height:5.60px;background:rgba(120,120,120,0.25)"></div>
<div style="position:absolute;left:233.80px;top:354.25px;width:6.15px;height:5.60px;background:rgba(120,120,120,0.25)"></div>
<div style="position:absolute;left:239.95px;top:354.25px;width:6.15px;height:5.60px;background:rgba(120,120,120,0.02)"></div>
<div style="position:absolute;left:959.60px;top:348.95px;width:26.40px;height:11.40px;background:#1e9bf0;border-radius:1.5px"></div>
<svg style="position:absolute;left:963.50px;top:351.25px" width="6" height="6" viewBox="0 0 6 6"><path d="M0.8 5.2 L4.8 1.2" stroke="#fff" stroke-width="1.1"/></svg>
<div style="position:absolute;left:970.50px;top:314.95px;line-height:80px;font-size:24.80px;color:#fff;font-weight:bold;white-space:nowrap;transform:scale(0.25);transform-origin:0 50%;">编辑</div>
<div style="position:absolute;left:993.70px;top:348.95px;width:27.20px;height:11.40px;background:#fb5521;border-radius:2px"></div>
<svg style="position:absolute;left:997.30px;top:351.25px" width="7" height="7" viewBox="0 0 7 7"><path d="M0.6 1.3 H6.2 M1.3 1.3 V6 H5.5 V1.3 M2.6 2.5 V5 M4.2 2.5 V5 M2.5 0.6 H4.3" fill="none" stroke="#fff" stroke-width="0.8"/></svg>
<div style="position:absolute;left:1004.80px;top:314.95px;line-height:80px;font-size:24.80px;color:#fff;font-weight:bold;white-space:nowrap;transform:scale(0.25);transform-origin:0 50%;">删除</div>
<div style="position:absolute;left:169.70px;top:330.18px;width:136.77px;text-align:center;line-height:80px;font-size:33.60px;color:#666;font-weight:normal;white-space:nowrap;transform:scale(0.2325,0.25);transform-origin:0 50%;">13</div>
<div style="position:absolute;left:265.00px;top:330.68px;width:254.00px;text-align:center;line-height:80px;font-size:29.60px;color:#666;font-weight:normal;white-space:nowrap;transform:scale(0.2500,0.25);transform-origin:0 50%;">女</div>
<div style="position:absolute;left:328.50px;top:330.68px;width:316.00px;text-align:center;line-height:80px;font-size:29.60px;color:#666;font-weight:normal;white-space:nowrap;transform:scale(0.2500,0.25);transform-origin:0 50%;">司法警察</div>
<div style="position:absolute;left:407.50px;top:330.68px;width:252.00px;text-align:center;line-height:80px;font-size:29.60px;color:#666;font-weight:normal;white-space:nowrap;transform:scale(0.2500,0.25);transform-origin:0 50%;">党员</div>
<div style="position:absolute;left:470.50px;top:330.18px;width:295.48px;text-align:center;line-height:80px;font-size:33.60px;color:#666;font-weight:normal;white-space:nowrap;transform:scale(0.2325,0.25);transform-origin:0 50%;">1999-06-01</div>
<div style="position:absolute;left:634.40px;top:330.18px;width:292.04px;text-align:center;line-height:80px;font-size:33.60px;color:#666;font-weight:normal;white-space:nowrap;transform:scale(0.2325,0.25);transform-origin:0 50%;">2021-11-01</div>
<div style="position:absolute;left:702.30px;top:330.68px;width:380.80px;text-align:center;line-height:80px;font-size:29.60px;color:#666;font-weight:normal;white-space:nowrap;transform:scale(0.2500,0.25);transform-origin:0 50%;">三司</div>
<div style="position:absolute;left:797.50px;top:330.18px;width:382.80px;text-align:center;line-height:80px;font-size:33.60px;color:#666;font-weight:normal;white-space:nowrap;transform:scale(0.2325,0.25);transform-origin:0 50%;">2021-11-01</div>
<div style="position:absolute;left:886.50px;top:330.18px;width:276.13px;text-align:center;line-height:80px;font-size:33.60px;color:#666;font-weight:normal;white-space:nowrap;transform:scale(0.2325,0.25);transform-origin:0 50%;">218</div>
<div style="position:absolute;left:221.50px;top:370.48px;width:6.15px;height:5.60px;background:rgba(120,120,120,0.22)"></div>
<div style="position:absolute;left:227.65px;top:370.48px;width:6.15px;height:5.60px;background:rgba(120,120,120,0.22)"></div>
<div style="position:absolute;left:233.80px;top:370.48px;width:6.15px;height:5.60px;background:rgba(120,120,120,0.28)"></div>
<div style="position:absolute;left:239.95px;top:370.48px;width:6.15px;height:5.60px;background:rgba(120,120,120,0.28)"></div>
<div style="position:absolute;left:959.60px;top:365.18px;width:26.40px;height:11.40px;background:#1e9bf0;border-radius:1.5px"></div>
<svg style="position:absolute;left:963.50px;top:367.48px" width="6" height="6" viewBox="0 0 6 6"><path d="M0.8 5.2 L4.8 1.2" stroke="#fff" stroke-width="1.1"/></svg>
<div style="position:absolute;left:970.50px;top:331.18px;line-height:80px;font-size:24.80px;color:#fff;font-weight:bold;white-space:nowrap;transform:scale(0.25);transform-origin:0 50%;">编辑</div>
<div style="position:absolute;left:993.70px;top:365.18px;width:27.20px;height:11.40px;background:#fb5521;border-radius:2px"></div>
<svg style="position:absolute;left:997.30px;top:367.48px" width="7" height="7" viewBox="0 0 7 7"><path d="M0.6 1.3 H6.2 M1.3 1.3 V6 H5.5 V1.3 M2.6 2.5 V5 M4.2 2.5 V5 M2.5 0.6 H4.3" fill="none" stroke="#fff" stroke-width="0.8"/></svg>
<div style="position:absolute;left:1004.80px;top:331.18px;line-height:80px;font-size:24.80px;color:#fff;font-weight:bold;white-space:nowrap;transform:scale(0.25);transform-origin:0 50%;">删除</div>
<div style="position:absolute;left:169.70px;top:346.41px;width:136.77px;text-align:center;line-height:80px;font-size:33.60px;color:#666;font-weight:normal;white-space:nowrap;transform:scale(0.2325,0.25);transform-origin:0 50%;">14</div>
<div style="position:absolute;left:265.00px;top:346.91px;width:254.00px;text-align:center;line-height:80px;font-size:29.60px;color:#666;font-weight:normal;white-space:nowrap;transform:scale(0.2500,0.25);transform-origin:0 50%;">男</div>
<div style="position:absolute;left:328.50px;top:346.91px;width:316.00px;text-align:center;line-height:80px;font-size:29.60px;color:#666;font-weight:normal;white-space:nowrap;transform:scale(0.2500,0.25);transform-origin:0 50%;">司法警察</div>
<div style="position:absolute;left:407.50px;top:346.91px;width:252.00px;text-align:center;line-height:80px;font-size:29.60px;color:#666;font-weight:normal;white-space:nowrap;transform:scale(0.2500,0.25);transform-origin:0 50%;">党员</div>
<div style="position:absolute;left:470.50px;top:346.41px;width:295.48px;text-align:center;line-height:80px;font-size:33.60px;color:#666;font-weight:normal;white-space:nowrap;transform:scale(0.2325,0.25);transform-origin:0 50%;">1979-04-01</div>
<div style="position:absolute;left:634.40px;top:346.41px;width:292.04px;text-align:center;line-height:80px;font-size:33.60px;color:#666;font-weight:normal;white-space:nowrap;transform:scale(0.2325,0.25);transform-origin:0 50%;">2021-02-01</div>
<div style="position:absolute;left:702.30px;top:346.91px;width:380.80px;text-align:center;line-height:80px;font-size:29.60px;color:#666;font-weight:normal;white-space:nowrap;transform:scale(0.2500,0.25);transform-origin:0 50%;">一督</div>
<div style="position:absolute;left:797.50px;top:346.41px;width:382.80px;text-align:center;line-height:80px;font-size:33.60px;color:#666;font-weight:normal;white-space:nowrap;transform:scale(0.2325,0.25);transform-origin:0 50%;">2021-02-01</div>
<div style="position:absolute;left:886.50px;top:346.41px;width:276.13px;text-align:center;line-height:80px;font-size:33.60px;color:#666;font-weight:normal;white-space:nowrap;transform:scale(0.2325,0.25);transform-origin:0 50%;">310</div>
<div style="position:absolute;left:221.50px;top:381.11px;width:6.15px;height:5.60px;background:rgba(120,120,120,0.06)"></div>
<div style="position:absolute;left:227.65px;top:381.11px;width:6.15px;height:5.60px;background:rgba(120,120,120,0.12)"></div>
<div style="position:absolute;left:233.80px;top:381.11px;width:6.15px;height:5.60px;background:rgba(120,120,120,0.12)"></div>
<div style="position:absolute;left:239.95px;top:381.11px;width:6.15px;height:5.60px;background:rgba(120,120,120,0.12)"></div>
<div style="position:absolute;left:221.50px;top:386.71px;width:6.15px;height:5.60px;background:rgba(120,120,120,0.22)"></div>
<div style="position:absolute;left:227.65px;top:386.71px;width:6.15px;height:5.60px;background:rgba(120,120,120,0.18)"></div>
<div style="position:absolute;left:233.80px;top:386.71px;width:6.15px;height:5.60px;background:rgba(120,120,120,0.22)"></div>
<div style="position:absolute;left:239.95px;top:386.71px;width:6.15px;height:5.60px;background:rgba(120,120,120,0.22)"></div>
<div style="position:absolute;left:959.60px;top:381.41px;width:26.40px;height:11.40px;background:#1e9bf0;border-radius:1.5px"></div>
<svg style="position:absolute;left:963.50px;top:383.71px" width="6" height="6" viewBox="0 0 6 6"><path d="M0.8 5.2 L4.8 1.2" stroke="#fff" stroke-width="1.1"/></svg>
<div style="position:absolute;left:970.50px;top:347.41px;line-height:80px;font-size:24.80px;color:#fff;font-weight:bold;white-space:nowrap;transform:scale(0.25);transform-origin:0 50%;">编辑</div>
<div style="position:absolute;left:993.70px;top:381.41px;width:27.20px;height:11.40px;background:#fb5521;border-radius:2px"></div>
<svg style="position:absolute;left:997.30px;top:383.71px" width="7" height="7" viewBox="0 0 7 7"><path d="M0.6 1.3 H6.2 M1.3 1.3 V6 H5.5 V1.3 M2.6 2.5 V5 M4.2 2.5 V5 M2.5 0.6 H4.3" fill="none" stroke="#fff" stroke-width="0.8"/></svg>
<div style="position:absolute;left:1004.80px;top:347.41px;line-height:80px;font-size:24.80px;color:#fff;font-weight:bold;white-space:nowrap;transform:scale(0.25);transform-origin:0 50%;">删除</div>
<div style="position:absolute;left:169.70px;top:362.63px;width:136.77px;text-align:center;line-height:80px;font-size:33.60px;color:#666;font-weight:normal;white-space:nowrap;transform:scale(0.2325,0.25);transform-origin:0 50%;">15</div>
<div style="position:absolute;left:265.00px;top:363.13px;width:254.00px;text-align:center;line-height:80px;font-size:29.60px;color:#666;font-weight:normal;white-space:nowrap;transform:scale(0.2500,0.25);transform-origin:0 50%;">女</div>
<div style="position:absolute;left:328.50px;top:363.13px;width:316.00px;text-align:center;line-height:80px;font-size:29.60px;color:#666;font-weight:normal;white-space:nowrap;transform:scale(0.2500,0.25);transform-origin:0 50%;">副大队长</div>
<div style="position:absolute;left:407.50px;top:363.13px;width:252.00px;text-align:center;line-height:80px;font-size:29.60px;color:#666;font-weight:normal;white-space:nowrap;transform:scale(0.2500,0.25);transform-origin:0 50%;">党员</div>
<div style="position:absolute;left:470.50px;top:362.63px;width:295.48px;text-align:center;line-height:80px;font-size:33.60px;color:#666;font-weight:normal;white-space:nowrap;transform:scale(0.2325,0.25);transform-origin:0 50%;">1989-06-01</div>
<div style="position:absolute;left:634.40px;top:362.63px;width:292.04px;text-align:center;line-height:80px;font-size:33.60px;color:#666;font-weight:normal;white-space:nowrap;transform:scale(0.2325,0.25);transform-origin:0 50%;">2011-08-08</div>
<div style="position:absolute;left:702.30px;top:363.13px;width:380.80px;text-align:center;line-height:80px;font-size:29.60px;color:#666;font-weight:normal;white-space:nowrap;transform:scale(0.2500,0.25);transform-origin:0 50%;">三督</div>
<div style="position:absolute;left:797.50px;top:362.63px;width:382.80px;text-align:center;line-height:80px;font-size:33.60px;color:#666;font-weight:normal;white-space:nowrap;transform:scale(0.2325,0.25);transform-origin:0 50%;">2021-04-01</div>
<div style="position:absolute;left:886.50px;top:362.63px;width:276.13px;text-align:center;line-height:80px;font-size:33.60px;color:#666;font-weight:normal;white-space:nowrap;transform:scale(0.2325,0.25);transform-origin:0 50%;">369</div>
<div style="position:absolute;left:221.50px;top:402.94px;width:6.15px;height:5.60px;background:rgba(120,120,120,0.22)"></div>
<div style="position:absolute;left:227.65px;top:402.94px;width:6.15px;height:5.60px;background:rgba(120,120,120,0.22)"></div>
<div style="position:absolute;left:233.80px;top:402.94px;width:6.15px;height:5.60px;background:rgba(120,120,120,0.22)"></div>
<div style="position:absolute;left:239.95px;top:402.94px;width:6.15px;height:5.60px;background:rgba(120,120,120,0.15)"></div>
<div style="position:absolute;left:959.60px;top:397.63px;width:26.40px;height:11.40px;background:#1e9bf0;border-radius:1.5px"></div>
<svg style="position:absolute;left:963.50px;top:399.94px" width="6" height="6" viewBox="0 0 6 6"><path d="M0.8 5.2 L4.8 1.2" stroke="#fff" stroke-width="1.1"/></svg>
<div style="position:absolute;left:970.50px;top:363.63px;line-height:80px;font-size:24.80px;color:#fff;font-weight:bold;white-space:nowrap;transform:scale(0.25);transform-origin:0 50%;">编辑</div>
<div style="position:absolute;left:993.70px;top:397.63px;width:27.20px;height:11.40px;background:#fb5521;border-radius:2px"></div>
<svg style="position:absolute;left:997.30px;top:399.94px" width="7" height="7" viewBox="0 0 7 7"><path d="M0.6 1.3 H6.2 M1.3 1.3 V6 H5.5 V1.3 M2.6 2.5 V5 M4.2 2.5 V5 M2.5 0.6 H4.3" fill="none" stroke="#fff" stroke-width="0.8"/></svg>
<div style="position:absolute;left:1004.80px;top:363.63px;line-height:80px;font-size:24.80px;color:#fff;font-weight:bold;white-space:nowrap;transform:scale(0.25);transform-origin:0 50%;">删除</div>
<div style="position:absolute;left:162.6px;top:324.4px;width:15.6px;height:20.4px;overflow:hidden"><div style="position:absolute;left:-4.6px;top:0;width:20.4px;height:20.4px;border-radius:50%;background:rgba(210,210,210,0.55)"></div></div>
<svg style="position:absolute;left:164.30px;top:331.20px" width="9" height="7" viewBox="0 0 9 7"><path d="M3.8 0.4 L0.6 3.3 L3.8 6.2 M7 0.4 L3.8 3.3 L7 6.2" fill="none" stroke="#b0b0b0" stroke-width="0.6"/></svg>
<div style="position:absolute;left:169.70px;top:553.80px;width:867.50px;height:8.40px;background:#f1f1f1"></div>
<div style="position:absolute;left:179.10px;top:554.50px;width:638.90px;height:6.90px;background:#c1c1c1"></div>
<svg style="position:absolute;left:172.00px;top:555.80px" width="4" height="5" viewBox="0 0 4 5"><path d="M3.2 0.4 L0.6 2.4 L3.2 4.4 Z" fill="#555"/></svg>
<svg style="position:absolute;left:1032.40px;top:555.80px" width="4" height="5" viewBox="0 0 4 5"><path d="M0.6 0.4 L3.2 2.4 L0.6 4.4 Z" fill="#555"/></svg>
<div style="position:absolute;left:169.70px;top:562.20px;width:867.50px;height:0.60px;background:#ececec"></div>
<svg style="position:absolute;left:1018.50px;top:502.00px" width="14" height="14" viewBox="0 0 14 14"><circle cx="7" cy="7" r="6.2" fill="#fff" stroke="#eaeaea" stroke-width="0.8"/><text x="7" y="10" font-size="9" font-weight="bold" text-anchor="middle" fill="#444" font-family="Liberation Sans">?</text></svg>
<svg style="position:absolute;left:1018.50px;top:527.80px" width="14" height="14" viewBox="0 0 14 14"><circle cx="7" cy="7" r="6.2" fill="#fff" stroke="#eaeaea" stroke-width="0.8"/><path d="M4 3.2 H8.5 V10.3 H4 Z" fill="none" stroke="#888" stroke-width="0.8"/><path d="M6.2 9 L9.8 5.6" stroke="#888" stroke-width="1"/></svg>
<svg style="position:absolute;left:1018.50px;top:553.60px" width="14" height="14" viewBox="0 0 14 14"><circle cx="7" cy="7" r="6.2" fill="#fff" stroke="#eaeaea" stroke-width="0.8"/><rect x="4" y="4" width="6" height="6" fill="none" stroke="#999" stroke-width="0.8"/><path d="M5.5 7.5 H8.5" stroke="#999" stroke-width="0.6"/></svg>
<svg style="position:absolute;left:177.50px;top:570.20px" width="5" height="6" viewBox="0 0 5 6"><path d="M4 0.5 L1 3 L4 5.5" fill="none" stroke="#c8c8c8" stroke-width="0.8"/></svg>
<div style="position:absolute;left:189.30px;top:565.80px;width:16.10px;height:14.00px;background:#1e9bf0;border-radius:1.5px"></div>
<div style="position:absolute;left:189.30px;top:533.50px;width:64.40px;text-align:center;line-height:80px;font-size:31.20px;color:#fff;font-weight:normal;white-space:nowrap;transform:scale(0.2500,0.25);transform-origin:0 50%;">1</div>
<div style="position:absolute;left:207.50px;top:533.50px;width:48.00px;text-align:center;line-height:80px;font-size:31.20px;color:#666;font-weight:normal;white-space:nowrap;transform:scale(0.2500,0.25);transform-origin:0 50%;">2</div>
<svg style="position:absolute;left:229.50px;top:570.20px" width="5" height="6" viewBox="0 0 5 6"><path d="M1 0.5 L4 3 L1 5.5" fill="none" stroke="#888" stroke-width="0.8"/></svg>
<div style="position:absolute;left:240.30px;top:533.50px;line-height:80px;font-size:25.20px;color:#aaa;font-weight:normal;white-space:nowrap;transform:scale(0.25);transform-origin:0 50%;">到第</div>
<div style="position:absolute;left:258.00px;top:565.80px;width:20.80px;height:16.80px;border:1px solid #e6e6e6;box-sizing:border-box;background:#fff"></div>
<div style="position:absolute;left:258.00px;top:534.80px;width:83.20px;text-align:center;line-height:80px;font-size:31.20px;color:#444;font-weight:normal;white-space:nowrap;transform:scale(0.2500,0.25);transform-origin:0 50%;">1</div>
<div style="position:absolute;left:284.50px;top:533.50px;line-height:80px;font-size:26.00px;color:#aaa;font-weight:normal;white-space:nowrap;transform:scale(0.25);transform-origin:0 50%;">页</div>
<div style="position:absolute;left:295.20px;top:566.00px;width:24.10px;height:13.60px;border:1px solid #e6e6e6;box-sizing:border-box;background:#fff;border-radius:1px"></div>
<div style="position:absolute;left:295.20px;top:533.50px;width:96.40px;text-align:center;line-height:80px;font-size:26.00px;color:#333;font-weight:bold;white-space:nowrap;transform:scale(0.2500,0.25);transform-origin:0 50%;">确定</div>
<div style="position:absolute;left:325.00px;top:533.50px;line-height:80px;font-size:27.20px;color:#666;font-weight:normal;white-space:nowrap;transform:scale(0.25);transform-origin:0 50%;">共 19 条</div>
<div style="position:absolute;left:353.80px;top:566.00px;width:40.00px;height:13.60px;border:1px solid #e6e6e6;box-sizing:border-box;background:#fff;border-radius:1px"></div>
<div style="position:absolute;left:357.50px;top:533.50px;line-height:80px;font-size:27.20px;color:#444;font-weight:normal;white-space:nowrap;transform:scale(0.25);transform-origin:0 50%;">15 条/页</div>
<svg style="position:absolute;left:386.00px;top:571.00px" width="5" height="4" viewBox="0 0 5 4"><path d="M0.5 0.6 L2.5 2.8 L4.5 0.6" fill="none" stroke="#222" stroke-width="0.9"/></svg>
</body></html>
